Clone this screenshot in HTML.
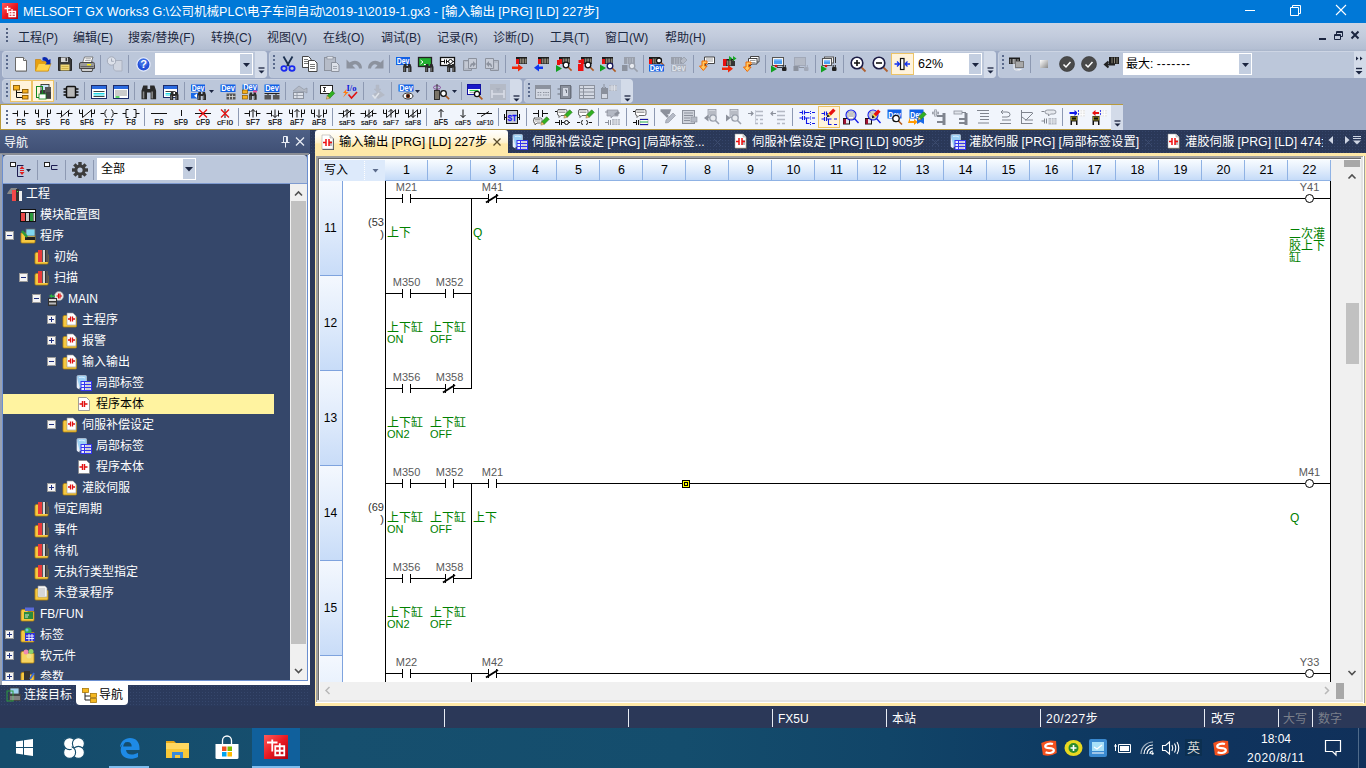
<!DOCTYPE html>
<html lang="zh-CN"><head><meta charset="utf-8"><title>MELSOFT GX Works3</title><style>
html,body{margin:0;padding:0;background:#2b3858;}
body{width:1366px;height:768px;overflow:hidden;position:relative;font-family:"Liberation Sans","Noto Sans CJK SC",sans-serif;font-size:12px;color:#1e2a44;}
div{position:absolute;box-sizing:border-box;}
svg{position:absolute;overflow:visible;}
.t{white-space:nowrap;line-height:16px;height:16px;}
.w{color:#fff;}
.menu{font-size:12px;color:#1b2740;}
.dev{font-size:11px;color:#5a5a5a;line-height:12px;height:12px;text-align:center;width:43px;}
.cm{font-size:12px;color:#008000;line-height:11px;height:11px;font-family:"Liberation Sans","Noto Sans CJK SC",sans-serif;}
.cn{font-size:12.5px;color:#000;line-height:20px;height:20px;text-align:center;width:43px;}
.tree{color:#fff;font-size:12px;}
.tab{color:#fff;font-size:12px;}
.sb{color:#fff;font-size:12px;}
.tbg{background:#bcc7da;border-radius:4px;border-top:1px solid #cdd5e4;border-left:1px solid #c8d1e1;}
.sep{width:1px;background:#8d99b2;}
</style></head><body>
<div style="left:0px;top:0px;width:1366px;height:23px;background:#0078d7;"></div>
<svg style="left:2px;top:3px" width="16" height="16" viewBox="0 0 16 16"><defs><linearGradient id="gi" x1="0" y1="0" x2="1" y2="1"><stop offset="0" stop-color="#ff5a5a"/><stop offset="0.5" stop-color="#e81a22"/><stop offset="1" stop-color="#b00010"/></linearGradient></defs><rect width="16" height="16" fill="url(#gi)"/><path d="M2.5 5.5h6M5.5 3v7M7 8.5h6.5v5H7zM10 6v8M7 11h6.5" stroke="#fff" stroke-width="1.3" fill="none"/></svg>
<div class="t w" style="left:23px;top:4px;font-size:12.5px;">MELSOFT GX Works3 G:\公司机械PLC\电子车间自动\2019-1\2019-1.gx3 - [输入输出 [PRG] [LD] 227步]</div>
<svg style="left:1240px;top:0" width="126" height="23"><path d="M5 10.5h10" stroke="#fff" stroke-width="1"/><path d="M50.5 7.5h8v8h-8zM52.5 7.5v-2h8v8h-2" stroke="#fff" fill="none" stroke-width="1"/><path d="M96 5l10 10M106 5l-10 10" stroke="#fff" stroke-width="1.1"/></svg>
<div style="left:0px;top:23px;width:1366px;height:28px;background:linear-gradient(#ccd4e3,#c3ccdd 45%,#b4bfd3 92%,#a9b5cb);"></div>
<div style="left:6px;top:28px;width:2px;height:2px;background:#52607f;"></div>
<div style="left:6px;top:32px;width:2px;height:2px;background:#52607f;"></div>
<div style="left:6px;top:36px;width:2px;height:2px;background:#52607f;"></div>
<div style="left:6px;top:40px;width:2px;height:2px;background:#52607f;"></div>
<div class="t menu" style="left:18px;top:30px;">工程(P)</div>
<div class="t menu" style="left:73px;top:30px;">编辑(E)</div>
<div class="t menu" style="left:128px;top:30px;">搜索/替换(F)</div>
<div class="t menu" style="left:211px;top:30px;">转换(C)</div>
<div class="t menu" style="left:267px;top:30px;">视图(V)</div>
<div class="t menu" style="left:323px;top:30px;">在线(O)</div>
<div class="t menu" style="left:381px;top:30px;">调试(B)</div>
<div class="t menu" style="left:437px;top:30px;">记录(R)</div>
<div class="t menu" style="left:493px;top:30px;">诊断(D)</div>
<div class="t menu" style="left:550px;top:30px;">工具(T)</div>
<div class="t menu" style="left:605px;top:30px;">窗口(W)</div>
<div class="t menu" style="left:665px;top:30px;">帮助(H)</div>
<svg style="left:1316px;top:28px" width="48" height="16"><path d="M3 11h7" stroke="#1b2540" stroke-width="2"/><path d="M18.5 6.5h6v5h-6zM18.5 7.5h6M20.5 6v-2.500h6v5h-2M20.500 4.500h6" stroke="#1b2540" fill="none" stroke-width="1"/><path d="M35.500 3.500l7 7M42.500 3.500l-7 7" stroke="#1b2540" stroke-width="2"/></svg>
<div style="left:0px;top:51px;width:1366px;height:79px;background:#9ca9c4;"></div>
<div class="tbg" style="left:2px;top:51px;width:265px;height:27px;"></div>
<div class="tbg" style="left:269px;top:51px;width:727px;height:27px;"></div>
<div class="tbg" style="left:998px;top:51px;width:368px;height:27px;border-radius:4px 0 0 4px;"></div>
<div class="tbg" style="left:2px;top:79px;width:520px;height:24px;"></div>
<div class="tbg" style="left:524px;top:79px;width:108px;height:24px;"></div>
<div style="left:255px;top:51px;width:12px;height:27px;background:#d3dbe9;border-radius:0 4px 4px 0;"></div>
<div style="left:984px;top:51px;width:12px;height:27px;background:#d3dbe9;border-radius:0 4px 4px 0;"></div>
<div style="left:510px;top:79px;width:12px;height:24px;background:#d3dbe9;border-radius:0 4px 4px 0;"></div>
<div style="left:621px;top:79px;width:12px;height:24px;background:#d3dbe9;border-radius:0 4px 4px 0;"></div>
<div style="left:0px;top:104px;width:1123px;height:26px;background:#f1f5fc;border:1px solid #b89a3c;border-width:1px 0 1px 1px;"></div>
<div style="left:1111px;top:105px;width:12px;height:25px;background:#d3dbe9;"></div>
<div style="left:6px;top:55px;width:2px;height:2px;background:#5a6a8c;"></div>
<div style="left:6px;top:59px;width:2px;height:2px;background:#5a6a8c;"></div>
<div style="left:6px;top:63px;width:2px;height:2px;background:#5a6a8c;"></div>
<div style="left:6px;top:67px;width:2px;height:2px;background:#5a6a8c;"></div>
<svg style="left:13px;top:56px" width="16" height="16" viewBox="0 0 16 16"><path d="M3 2h8l3 3v10.500h-11z" fill="#777"/><path d="M2.500 1.500h8l3 3v10.500h-11z" fill="#fff" stroke="#6a6a6a"/><path d="M10.500 1.500v3h3" fill="#e8e8e8" stroke="#6a6a6a"/></svg>
<svg style="left:35px;top:56px" width="16" height="16" viewBox="0 0 16 16"><path d="M0.500 3.500h5l1.500 2h6.500v9.500h-13z" fill="#e8a010" stroke="#c07800" stroke-width="0.600"/><path d="M0.500 15l3-7.500h12.500l-3 7.500z" fill="#ffd24a" stroke="#d89a10" stroke-width="0.700"/><path d="M7.500 1.500q4.500-1.500 6 2.500l2-1v5.500h-5.500l1.800-1.600q-1-2.800-4.300-2.400z" fill="#0828b0"/></svg>
<svg style="left:57px;top:56px" width="16" height="16" viewBox="0 0 16 16"><path d="M1.500 1.500h11l2 2v11h-13z" fill="#3a3a3a" stroke="#111" stroke-width="0.800"/><rect x="4" y="1.500" width="7" height="4.500" fill="#d8d8d8"/><rect x="8.500" y="2" width="1.600" height="3.200" fill="#3a3a3a"/><rect x="3.500" y="8.500" width="9" height="6" fill="#f0d878"/><path d="M4.500 10.500h7M4.500 12.500h7" stroke="#c8a840" stroke-width="0.800"/></svg>
<svg style="left:79px;top:56px" width="16" height="16" viewBox="0 0 16 16"><path d="M3.500 7l2-6h8.500l-2 6z" fill="#fff" stroke="#666" stroke-width="0.800"/><path d="M6.500 2.800h5.500M6 4.600h5.500" stroke="#888" stroke-width="0.800"/><path d="M0.500 8q0-1.500 1.500-1.500h12q1.500 0 1.500 1.500v4.500h-15z" fill="#9a9a9a" stroke="#3c3c3c" stroke-width="0.900"/><path d="M2 12.500h12l-1 3h-10z" fill="#d0d0d0" stroke="#3c3c3c" stroke-width="0.900"/><path d="M1.500 10.500h13" stroke="#555" stroke-width="0.800"/><rect x="8" y="8" width="4" height="1.400" fill="#f8f000"/><path d="M13 5.500l2.500 1.500v2" stroke="#777" fill="none" stroke-width="0.800"/></svg>
<svg style="left:107px;top:56px" width="16" height="16" viewBox="0 0 16 16"><path d="M6.500 4.500h8.500v10.500h-6.500l-2-2z" fill="#d0d5e0" stroke="#aab1c0"/><circle cx="4.500" cy="5" r="4.200" fill="#dde1ea" stroke="#a4abba"/><path d="M4.500 2.500v2.800h2.300" stroke="#a4abba" fill="none"/></svg>
<svg style="left:136px;top:56px" width="16" height="16" viewBox="0 0 16 16"><circle cx="7.500" cy="8.500" r="6.600" fill="#2450d8" stroke="#e8eefc" stroke-width="1.200"/><circle cx="7.500" cy="6.500" r="4.500" fill="#5a8af0" opacity="0.450"/><text x="7.500" y="12.300" font-family="Liberation Sans,sans-serif" font-weight="bold" font-size="11" text-anchor="middle" fill="#fff">?</text></svg>
<div class="sep" style="left:100px;top:55px;width:1px;height:18px;"></div>
<div class="sep" style="left:128px;top:55px;width:1px;height:18px;"></div>
<div style="left:155px;top:53px;width:98px;height:22px;background:#fff;"></div>
<div style="left:240px;top:54px;width:12px;height:20px;background:#c3cee0;"></div>
<svg style="left:243px;top:63px" width="7" height="4"><path d="M0 0h7l-3.500 4z" fill="#1b2540"/></svg>
<svg style="left:258px;top:67px" width="8" height="8"><path d="M0.500 1h6" stroke="#1b2540" stroke-width="1.300"/><path d="M0.500 3.500h6l-3 3z" fill="#1b2540"/></svg>
<div style="left:273px;top:55px;width:2px;height:2px;background:#5a6a8c;"></div>
<div style="left:273px;top:59px;width:2px;height:2px;background:#5a6a8c;"></div>
<div style="left:273px;top:63px;width:2px;height:2px;background:#5a6a8c;"></div>
<div style="left:273px;top:67px;width:2px;height:2px;background:#5a6a8c;"></div>
<svg style="left:280px;top:56px" width="16" height="16" viewBox="0 0 16 16"><path d="M3.500 0.500l5.500 9.500M12.500 0.500l-5.500 9.500" stroke="#1c3050" stroke-width="1.800"/><ellipse cx="4" cy="12.500" rx="2.600" ry="2.300" fill="none" stroke="#1828f0" stroke-width="1.800"/><ellipse cx="12" cy="12.500" rx="2.600" ry="2.300" fill="none" stroke="#1828f0" stroke-width="1.800"/></svg>
<svg style="left:302px;top:56px" width="16" height="16" viewBox="0 0 16 16"><path d="M0.500 0.500h6l2.500 2.500v8.500h-8.500z" fill="#fff" stroke="#333" stroke-width="0.900"/><path d="M2 3.500h4M2 5.500h5M2 7.500h5" stroke="#555" stroke-width="0.800"/><path d="M6.500 4.500h6l2.500 2.500v8.500h-8.500z" fill="#fff" stroke="#333" stroke-width="0.900"/><path d="M8 8.500h5M8 10.500h5M8 12.500h5" stroke="#555" stroke-width="0.800"/></svg>
<svg style="left:324px;top:56px" width="16" height="16" viewBox="0 0 16 16"><rect x="0.500" y="1.500" width="11" height="13" fill="#b6bcc8" stroke="#8c929e"/><rect x="3" y="0.500" width="6" height="2.500" fill="#e0e4ec" stroke="#8c929e" stroke-width="0.700"/><path d="M7.500 6.500h5l2.500 2.500v6.500h-7.500z" fill="#dde1e9" stroke="#8c929e"/><path d="M9 10.500h4M9 12.500h4" stroke="#8c929e" stroke-width="0.700"/></svg>
<svg style="left:346px;top:56px" width="16" height="16" viewBox="0 0 16 16"><path d="M0.500 3.500v9h9l-3-3q2.500-2 4.500-0.500t2 3.500h3q0-5-4-7t-8.500 1z" fill="#8c929e"/></svg>
<svg style="left:368px;top:56px" width="16" height="16" viewBox="0 0 16 16"><g transform="translate(16,0) scale(-1,1)"><path d="M0.500 3.500v9h9l-3-3q2.500-2 4.500-0.500t2 3.500h3q0-5-4-7t-8.500 1z" fill="#8c929e"/></g></svg>
<svg style="left:396px;top:56px" width="16" height="16" viewBox="0 0 16 16"><rect x="0" y="1" width="14" height="8" fill="#1060e6"/><text x="7.0" y="8.2" font-family="Liberation Sans,sans-serif" font-weight="bold" font-size="8.5" text-anchor="middle" fill="#fff" textLength="12.5" lengthAdjust="spacingAndGlyphs">Dev</text><g transform="translate(7,8) scale(1)"><path d="M1 0h2.500v2h1.500v-2h2.500l1 3v5h-3.200v-4h-2.100v4h-3.200v-5z" fill="#2a2a2a"/><path d="M1.200 3.500v4M6.200 3.500v4" stroke="#8a8a8a" stroke-width="0.900"/></g></svg>
<svg style="left:418px;top:56px" width="16" height="16" viewBox="0 0 16 16"><rect x="0.500" y="1.500" width="13" height="9" fill="#22b030" stroke="#222" stroke-width="1.300"/><path d="M2.500 4l2.500 2-2.500 2M6 8.500h3" stroke="#fff" fill="none" stroke-width="1"/><g transform="translate(7,8) scale(1)"><path d="M1 0h2.500v2h1.500v-2h2.500l1 3v5h-3.200v-4h-2.100v4h-3.200v-5z" fill="#2a2a2a"/><path d="M1.200 3.500v4M6.200 3.500v4" stroke="#8a8a8a" stroke-width="0.900"/></g></svg>
<svg style="left:440px;top:56px" width="16" height="16" viewBox="0 0 16 16"><rect x="0.500" y="1.500" width="14" height="8" fill="#fff" stroke="#111" stroke-width="1.300"/><path d="M1 5.500h3M4.500 3.500v4M6.500 3.500v4M6.500 5.500h2M13 5.500h1.500" stroke="#111" stroke-width="1"/><circle cx="10.500" cy="5.500" r="2" fill="none" stroke="#111"/><g transform="translate(7,8) scale(1)"><path d="M1 0h2.500v2h1.500v-2h2.500l1 3v5h-3.200v-4h-2.100v4h-3.200v-5z" fill="#2a2a2a"/><path d="M1.200 3.500v4M6.200 3.500v4" stroke="#8a8a8a" stroke-width="0.900"/></g></svg>
<svg style="left:462px;top:56px" width="16" height="16" viewBox="0 0 16 16"><path d="M1.500 4.500h8v10h-8z" fill="#b4bac6" stroke="#8c929e"/><path d="M6.500 2.500h8v10h-8z" fill="#c6cbd6" stroke="#8c929e"/><path d="M8 11q0-4 3-4v-2l3 3-3 3v-2q-1.500 0-2 2z" fill="#8c929e"/><path d="M3 7h3M3 9h3M3 11h3" stroke="#dde1e9" stroke-width="0.800"/></svg>
<svg style="left:484px;top:56px" width="16" height="16" viewBox="0 0 16 16"><path d="M6.500 4.500h8v10h-8z" fill="#b4bac6" stroke="#8c929e"/><path d="M1.500 2.500h8v10h-8z" fill="#c6cbd6" stroke="#8c929e"/><path d="M8 11q0-4-3-4v-2l-3 3 3 3v-2q1.500 0 2 2z" fill="#8c929e"/><path d="M10.500 8h3M10.500 10h3M10.500 12h3" stroke="#dde1e9" stroke-width="0.800"/></svg>
<svg style="left:512px;top:56px" width="16" height="16" viewBox="0 0 16 16"><rect x="4" y="1" width="11" height="7" fill="#1c1c1c"/><rect x="4" y="3" width="3" height="5" fill="#e81010"/><rect x="7.7" y="2.5" width="1.800" height="5" fill="#8a8474"/><rect x="10.2" y="2.5" width="1.800" height="5" fill="#8a8474"/><rect x="12.7" y="2.5" width="1.800" height="5" fill="#8a8474"/><path d="M0 10.5h6v-2.500l5 3.800-5 3.800v-2.500h-6z" fill="#f02808"/></svg>
<svg style="left:534px;top:56px" width="16" height="16" viewBox="0 0 16 16"><rect x="4" y="1" width="11" height="7" fill="#1c1c1c"/><rect x="4" y="3" width="3" height="5" fill="#e81010"/><rect x="7.7" y="2.5" width="1.800" height="5" fill="#8a8474"/><rect x="10.2" y="2.5" width="1.800" height="5" fill="#8a8474"/><rect x="12.7" y="2.5" width="1.800" height="5" fill="#8a8474"/><path d="M9 10.5h-4v-2.500l-5 3.800 5 3.800v-2.500h4z" fill="#1038f0"/></svg>
<svg style="left:556px;top:56px" width="16" height="16" viewBox="0 0 16 16"><rect x="3" y="1" width="11" height="7" fill="#1c1c1c"/><rect x="3" y="3" width="3" height="5" fill="#e81010"/><rect x="6.7" y="2.5" width="1.800" height="5" fill="#8a8474"/><rect x="9.2" y="2.5" width="1.800" height="5" fill="#8a8474"/><rect x="11.7" y="2.5" width="1.800" height="5" fill="#8a8474"/><rect x="1" y="4" width="3" height="5" fill="#e81010"/><path d="M0 9l6 3.500-6 3.500z" fill="#10a020"/><path d="M11.959999999999999 10.959999999999999L15.600000000000001 14.600000000000001" stroke="#b05a20" stroke-width="1.600"/><circle cx="10" cy="9" r="2.8" fill="#fff" stroke="#111" stroke-width="1.300"/></svg>
<svg style="left:578px;top:56px" width="16" height="16" viewBox="0 0 16 16"><rect x="3" y="1" width="11" height="7" fill="#1c1c1c"/><rect x="3" y="3" width="3" height="5" fill="#e81010"/><rect x="6.7" y="2.5" width="1.800" height="5" fill="#8a8474"/><rect x="9.2" y="2.5" width="1.800" height="5" fill="#8a8474"/><rect x="11.7" y="2.5" width="1.800" height="5" fill="#8a8474"/><rect x="0.500" y="4" width="4" height="3" fill="#e81010"/><rect x="0" y="8" width="5.500" height="7" fill="#f01010"/><path d="M11.959999999999999 10.959999999999999L15.600000000000001 14.600000000000001" stroke="#b05a20" stroke-width="1.600"/><circle cx="10" cy="9" r="2.8" fill="#fff" stroke="#111" stroke-width="1.300"/></svg>
<svg style="left:600px;top:56px" width="16" height="16" viewBox="0 0 16 16"><rect x="2" y="1" width="11" height="7" fill="#1c1c1c"/><rect x="2" y="3" width="3" height="5" fill="#e81010"/><rect x="5.7" y="2.5" width="1.800" height="5" fill="#8a8474"/><rect x="8.2" y="2.5" width="1.800" height="5" fill="#8a8474"/><rect x="10.7" y="2.5" width="1.800" height="5" fill="#8a8474"/><path d="M0 8.5l6 3.500-6 3.500z" fill="#10a020"/><path d="M11.959999999999999 11.959999999999999L15.600000000000001 15.600000000000001" stroke="#b05a20" stroke-width="1.600"/><circle cx="10" cy="10" r="2.8" fill="#fff" stroke="#18185a" stroke-width="1.300"/></svg>
<svg style="left:622px;top:56px" width="16" height="16" viewBox="0 0 16 16"><rect x="2" y="1" width="11" height="7" fill="#9aa0ac"/><path d="M5.5 2v6M8 2v6M10.5 2v6" stroke="#b8bec9" stroke-width="0.800"/><rect x="0" y="9" width="5.500" height="6" fill="#8c929e"/><path d="M11.959999999999999 11.959999999999999L15.600000000000001 15.600000000000001" stroke="#9aa0ac" stroke-width="1.600"/><circle cx="10" cy="10" r="2.8" fill="#e8ebf0" stroke="#9aa0ac" stroke-width="1.300"/></svg>
<svg style="left:649px;top:56px" width="16" height="16" viewBox="0 0 16 16"><rect x="0" y="1" width="11" height="7" fill="#1c1c1c"/><rect x="0" y="3" width="3" height="5" fill="#e81010"/><rect x="3.7" y="2.5" width="1.800" height="5" fill="#8a8474"/><rect x="6.2" y="2.5" width="1.800" height="5" fill="#8a8474"/><rect x="8.7" y="2.5" width="1.800" height="5" fill="#8a8474"/><path d="M11.75 6.25L15.3 9.8" stroke="#b05a20" stroke-width="1.600"/><circle cx="10" cy="4.5" r="2.5" fill="#fff" stroke="#111" stroke-width="1.300"/><rect x="0" y="8.5" width="15" height="7" fill="#1060e6"/><text x="7.5" y="14.7" font-family="Liberation Sans,sans-serif" font-weight="bold" font-size="8.5" text-anchor="middle" fill="#fff" textLength="13.5" lengthAdjust="spacingAndGlyphs">Dev</text></svg>
<svg style="left:671px;top:56px" width="16" height="16" viewBox="0 0 16 16"><rect x="0" y="1" width="11" height="7" fill="#9aa0ac"/><path d="M3.5 2v6M6 2v6M8.5 2v6" stroke="#b8bec9" stroke-width="0.800"/><path d="M9 5l4-4 3 3-4 4z" fill="#b4bac6" stroke="#8c929e" stroke-width="0.600"/><rect x="0" y="8.5" width="15" height="7" fill="#a8aeba"/><text x="7.5" y="14.7" font-family="Liberation Sans,sans-serif" font-weight="bold" font-size="8.5" text-anchor="middle" fill="#dfe3ea" textLength="13.5" lengthAdjust="spacingAndGlyphs">Dev</text></svg>
<svg style="left:700px;top:56px" width="16" height="16" viewBox="0 0 16 16"><path d="M4.5 1h10v6.5h-6.5l-2.500 2.500v-2.500h-1z" fill="#fff" stroke="#333" stroke-width="0.900"/><path d="M6.0 3h7M6.0 5h7" stroke="#777" stroke-width="0.700"/><path d="M7 5h-5v5h-2.500l3.800 4.500 3.800-4.500h-2.500v-2.500h2.400z" fill="#ffc860" stroke="#f06800" stroke-width="1"/></svg>
<svg style="left:722px;top:56px" width="16" height="16" viewBox="0 0 16 16"><rect x="1" y="3" width="11" height="7" fill="#1c1c1c"/><rect x="1" y="5" width="3" height="5" fill="#e81010"/><rect x="4.7" y="4.5" width="1.800" height="5" fill="#8a8474"/><rect x="7.2" y="4.5" width="1.800" height="5" fill="#8a8474"/><rect x="9.7" y="4.5" width="1.800" height="5" fill="#8a8474"/><rect x="1" y="3" width="3.500" height="3.500" fill="#e81010"/><path d="M7 0l3.500 2.500-3.500 2.500zM11 0l3.500 2.500-3.500 2.500z" fill="#18a828"/><rect x="9" y="5" width="4" height="5" fill="#333"/><path d="M0 11.5h6v-2.500l5 3.800-5 3.800v-2.500h-6z" fill="#f02808"/></svg>
<svg style="left:744px;top:56px" width="16" height="16" viewBox="0 0 16 16"><path d="M6.5 0.5h8.5v5.5h-5.0l-2.500 2.500v-2.500h-1z" fill="#fff" stroke="#333" stroke-width="0.900"/><path d="M8.0 2.5h5.5M8.0 4.5h5.5" stroke="#777" stroke-width="0.700"/><path d="M4.5 2.5h8.5v5.5h-5.0l-2.500 2.500v-2.500h-1z" fill="#fff" stroke="#333" stroke-width="0.900"/><path d="M6.0 4.5h5.5M6.0 6.5h5.5" stroke="#777" stroke-width="0.700"/><path d="M7 6h-5v5h-2.500l3.800 4.500 3.800-4.500h-2.500v-2.500h2.400z" fill="#ffc860" stroke="#f06800" stroke-width="1"/></svg>
<svg style="left:771px;top:56px" width="16" height="16" viewBox="0 0 16 16"><rect x="1.5" y="1.5" width="11" height="8" fill="#f4f4f4" stroke="#555"/><rect x="3" y="3" width="8" height="5" fill="#4a9ef0"/><rect x="3" y="3" width="8" height="1.500" fill="#8cc4ff"/><path d="M6 9.500v2h5" stroke="#333" fill="none"/><path d="M0 9.5l6 3.500-6 3.500z" fill="#10a020"/><circle cx="5" cy="10" r="1.300" fill="#e01010"/><rect x="11" y="11" width="4.500" height="4" rx="1" fill="#222"/><path d="M12.2 9v2M14.3 9v2" stroke="#222" stroke-width="1"/></svg>
<svg style="left:793px;top:56px" width="16" height="16" viewBox="0 0 16 16"><rect x="1.5" y="1.5" width="11" height="8" fill="#b4bac6" stroke="#a2a9b8"/><path d="M6 9.500v2h5" stroke="#8c929e" fill="none"/><rect x="0.500" y="10" width="5" height="5" fill="#8c929e"/><rect x="11" y="11" width="4.500" height="4" rx="1" fill="#a2a9b8"/><path d="M12.2 9v2M14.3 9v2" stroke="#a2a9b8" stroke-width="1"/></svg>
<svg style="left:821px;top:56px" width="16" height="16" viewBox="0 0 16 16"><rect x="3.5" y="1.0" width="9" height="6" fill="#f4f4f4" stroke="#555"/><rect x="5" y="2.5" width="6" height="3" fill="#4a9ef0"/><rect x="5" y="2.5" width="6" height="1.500" fill="#8cc4ff"/><rect x="1.5" y="2.5" width="9" height="7" fill="#f4f4f4" stroke="#555"/><rect x="3" y="4" width="6" height="4" fill="#4a9ef0"/><rect x="3" y="4" width="6" height="1.500" fill="#8cc4ff"/><path d="M14.500 1v6" stroke="#333"/><path d="M0 9.5l6 3.500-6 3.500z" fill="#10a020"/><circle cx="5" cy="10" r="1.300" fill="#e01010"/><rect x="11" y="11" width="4.500" height="4" rx="1" fill="#222"/><path d="M12.2 9v2M14.3 9v2" stroke="#222" stroke-width="1"/></svg>
<svg style="left:850px;top:56px" width="16" height="16" viewBox="0 0 16 16"><path d="M11.500 11.500l4 4" stroke="#b06030" stroke-width="1.800"/><circle cx="7" cy="7" r="5.800" fill="#fff" stroke="#1c1c44" stroke-width="1.600"/><path d="M4 7h6M7 4v6" stroke="#111" stroke-width="1.600"/></svg>
<svg style="left:872px;top:56px" width="16" height="16" viewBox="0 0 16 16"><path d="M11.500 11.500l4 4" stroke="#b06030" stroke-width="1.800"/><circle cx="7" cy="7" r="5.800" fill="#fff" stroke="#1c1c44" stroke-width="1.600"/><path d="M4 7h6" stroke="#111" stroke-width="1.600"/></svg>
<div class="sep" style="left:389px;top:55px;width:1px;height:18px;"></div>
<div class="sep" style="left:505px;top:55px;width:1px;height:18px;"></div>
<div class="sep" style="left:643px;top:55px;width:1px;height:18px;"></div>
<div class="sep" style="left:693px;top:55px;width:1px;height:18px;"></div>
<div class="sep" style="left:765px;top:55px;width:1px;height:18px;"></div>
<div class="sep" style="left:815px;top:55px;width:1px;height:18px;"></div>
<div class="sep" style="left:843px;top:55px;width:1px;height:18px;"></div>
<div style="left:891px;top:53px;width:23px;height:22px;background:#fff3dc;border:1px solid #ecc468;"></div>
<svg style="left:894px;top:56px" width="16" height="16" viewBox="0 0 16 16"><rect x="6.500" y="2.500" width="3.500" height="11" fill="#fff" stroke="#111" stroke-width="1.200"/><path d="M0.500 8h5M3 5.500l2.500 2.500-2.500 2.500M16 8h-5M13.500 5.500l-2.500 2.500 2.500 2.500" stroke="#1030f0" stroke-width="1.300" fill="none"/></svg>
<div style="left:914px;top:53px;width:68px;height:22px;background:#fff;"></div>
<div style="left:969px;top:54px;width:12px;height:20px;background:#c3cee0;"></div>
<svg style="left:972px;top:63px" width="7" height="4"><path d="M0 0h7l-3.500 4z" fill="#1b2540"/></svg>
<div class="t" style="left:918px;top:56px;color:#000;font-size:12.5px;">62%</div>
<svg style="left:987px;top:67px" width="8" height="8"><path d="M0.500 1h6" stroke="#1b2540" stroke-width="1.300"/><path d="M0.500 3.500h6l-3 3z" fill="#1b2540"/></svg>
<div style="left:1002px;top:55px;width:2px;height:2px;background:#5a6a8c;"></div>
<div style="left:1002px;top:59px;width:2px;height:2px;background:#5a6a8c;"></div>
<div style="left:1002px;top:63px;width:2px;height:2px;background:#5a6a8c;"></div>
<div style="left:1002px;top:67px;width:2px;height:2px;background:#5a6a8c;"></div>
<svg style="left:1009px;top:56px" width="16" height="16" viewBox="0 0 16 16"><rect x="0" y="1.500" width="11" height="6.500" fill="#1c1c1c"/><path d="M1.500 3v4.500M4 3v4.500M6.500 3v4.500M9 3v4.500" stroke="#777" stroke-width="1.500"/><rect x="6.500" y="5.500" width="8" height="6" fill="#a8a8a8" stroke="#777"/><path d="M5 3v9q0 2 2 2h4M8.500 13.500h4" stroke="#eee" fill="none"/></svg>
<svg style="left:1036px;top:56px" width="16" height="16" viewBox="0 0 16 16"><defs><linearGradient id="gsq" x1="0" y1="0" x2="1" y2="1"><stop offset="0" stop-color="#fff"/><stop offset="1" stop-color="#888"/></linearGradient></defs><rect x="4" y="4" width="8" height="8" fill="url(#gsq)"/></svg>
<svg style="left:1059px;top:56px" width="16" height="16" viewBox="0 0 16 16"><circle cx="8" cy="8" r="7.500" fill="#4a4a4a" stroke="#333" stroke-width="0.600"/><path d="M4.500 8.500l2.500 2.500 4.500-5" stroke="#fff" stroke-width="1.500" fill="none"/></svg>
<svg style="left:1081px;top:56px" width="16" height="16" viewBox="0 0 16 16"><circle cx="8" cy="8" r="7.500" fill="#4a4a4a" stroke="#333" stroke-width="0.600"/><path d="M4.500 8.500l2.500 2.500 4.500-5" stroke="#fff" stroke-width="1.500" fill="none"/></svg>
<svg style="left:1103px;top:56px" width="16" height="16" viewBox="0 0 16 16"><rect x="6" y="1" width="10" height="7" fill="#1c1c1c"/><path d="M9 1.500v6M11.500 1.500v6M14 1.500v6" stroke="#8a8474"/><path d="M12 8.500h-9M5.500 5.500l-3.500 3 3.500 3" stroke="#222" stroke-width="2" fill="none"/></svg>
<div class="sep" style="left:1030px;top:55px;width:1px;height:18px;"></div>
<div style="left:1123px;top:53px;width:129px;height:22px;background:#fff;"></div>
<div style="left:1239px;top:54px;width:12px;height:20px;background:#c3cee0;"></div>
<svg style="left:1242px;top:63px" width="7" height="4"><path d="M0 0h7l-3.500 4z" fill="#1b2540"/></svg>
<div class="t" style="left:1126px;top:56px;color:#000;font-size:12px;">最大: <span style="letter-spacing:0.9px">-------</span></div>
<div style="left:1354px;top:51px;width:12px;height:27px;background:#d3dbe9;"></div>
<svg style="left:1355px;top:54px" width="9" height="22"><path d="M1 2.500l2.500 2-2.500 2zM5 2.500l2.500 2-2.500 2z" fill="#1b2540"/><path d="M1 14.500h6" stroke="#1b2540" stroke-width="1.400"/><path d="M0.500 17h7l-3.500 3.500z" fill="#1b2540"/></svg>
<div style="left:6px;top:83px;width:2px;height:2px;background:#5a6a8c;"></div>
<div style="left:6px;top:87px;width:2px;height:2px;background:#5a6a8c;"></div>
<div style="left:6px;top:91px;width:2px;height:2px;background:#5a6a8c;"></div>
<div style="left:6px;top:95px;width:2px;height:2px;background:#5a6a8c;"></div>
<div style="left:10px;top:80px;width:22px;height:22px;background:#fff3dc;border:1px solid #ecc468;"></div>
<div style="left:32px;top:80px;width:22px;height:22px;background:#fff3dc;border:1px solid #ecc468;"></div>
<svg style="left:13px;top:84px" width="16" height="16" viewBox="0 0 16 16"><path d="M3.500 6v7.500h6M3.500 8.500h6" stroke="#111" fill="none"/><rect x="0.500" y="1.500" width="6" height="4.500" fill="#f5b020" stroke="#8a5a00" stroke-width="0.900"/><rect x="9.500" y="5.500" width="5.500" height="3.500" fill="#f5b020" stroke="#8a5a00" stroke-width="0.900"/><rect x="9.500" y="11.500" width="5.500" height="3.500" fill="#f5b020" stroke="#8a5a00" stroke-width="0.900"/></svg>
<svg style="left:36px;top:84px" width="16" height="16" viewBox="0 0 16 16"><rect x="5" y="0.500" width="8" height="6" fill="#c8e4f8" stroke="#333" stroke-width="0.900"/><rect x="4" y="6.500" width="11" height="8" fill="#3a3a3a"/><rect x="9" y="3" width="6" height="12" fill="#555"/><rect x="0.500" y="2.500" width="6" height="11" fill="none" stroke="#108a20"/><rect x="3" y="10" width="7" height="5" fill="#fff" stroke="#108a20" stroke-width="0.800"/><path d="M10 9h5M10 11h5M10 13h5" stroke="#222" stroke-width="0.800"/></svg>
<svg style="left:63px;top:84px" width="16" height="16" viewBox="0 0 16 16"><rect x="3.500" y="2.500" width="9" height="11" rx="1" fill="#b8b8b8" stroke="#111" stroke-width="1.500"/><path d="M0.500 5h3M0.500 8h3M0.500 11h3M12.500 5h3M12.500 8h3M12.500 11h3" stroke="#111" stroke-width="1.600"/></svg>
<svg style="left:91px;top:84px" width="16" height="16" viewBox="0 0 16 16"><rect x="0.500" y="1.500" width="15" height="13" fill="#fff" stroke="#1c2c6a"/><rect x="1" y="2" width="14" height="3" fill="#2a6ae0"/><path d="M2.500 7.500h11M2.500 12.500h11" stroke="#444"/><path d="M2.500 9.500h11M2.500 11h11" stroke="#20d8e8" stroke-width="1.200"/></svg>
<svg style="left:113px;top:84px" width="16" height="16" viewBox="0 0 16 16"><rect x="0.500" y="1.500" width="15" height="13" fill="#fff" stroke="#1c2c6a"/><rect x="1" y="2" width="14" height="3" fill="#2a6ae0"/><path d="M2.500 7h11M2.500 9h11M2.500 11h11" stroke="#333" stroke-dasharray="1 1"/><path d="M2.500 13h4" stroke="#18c028" stroke-width="1.400"/></svg>
<svg style="left:141px;top:84px" width="16" height="16" viewBox="0 0 16 16"><g transform="translate(0.5,1.5) scale(1.72)"><path d="M1 0h2.500v2h1.500v-2h2.500l1 3v5h-3.200v-4h-2.100v4h-3.200v-5z" fill="#2a2a2a"/><path d="M1.200 3.500v4M6.200 3.500v4" stroke="#8a8a8a" stroke-width="0.900"/></g></svg>
<svg style="left:163px;top:84px" width="16" height="16" viewBox="0 0 16 16"><rect x="0.500" y="1.500" width="14" height="12" fill="#fff" stroke="#1c2c6a"/><rect x="1" y="2" width="13" height="3" fill="#2a6ae0"/><path d="M2.500 7.500h10" stroke="#444"/><path d="M2.500 9.500h6M2.500 11h6" stroke="#20d8e8" stroke-width="1.200"/><g transform="translate(7,8) scale(1)"><path d="M1 0h2.500v2h1.500v-2h2.500l1 3v5h-3.200v-4h-2.100v4h-3.200v-5z" fill="#2a2a2a"/><path d="M1.200 3.500v4M6.200 3.500v4" stroke="#8a8a8a" stroke-width="0.900"/></g></svg>
<svg style="left:191px;top:84px" width="16" height="16" viewBox="0 0 16 16"><rect x="0" y="0.5" width="14" height="7" fill="#1060e6"/><text x="7.0" y="6.7" font-family="Liberation Sans,sans-serif" font-weight="bold" font-size="8.5" text-anchor="middle" fill="#fff" textLength="12.5" lengthAdjust="spacingAndGlyphs">Dev</text><rect x="0" y="9" width="7" height="5.500" fill="#1a6ae8"/><path d="M6 9.500l-3 2.300 3 2.300z" fill="#fff"/><g transform="translate(6.5,8) scale(1)"><path d="M1 0h2.500v2h1.500v-2h2.500l1 3v5h-3.200v-4h-2.100v4h-3.200v-5z" fill="#2a2a2a"/><path d="M1.200 3.500v4M6.200 3.500v4" stroke="#8a8a8a" stroke-width="0.900"/></g></svg>
<svg style="left:220px;top:84px" width="16" height="16" viewBox="0 0 16 16"><rect x="0.5" y="0.5" width="15" height="7.5" fill="#1060e6"/><text x="8.0" y="7.2" font-family="Liberation Sans,sans-serif" font-weight="bold" font-size="8.5" text-anchor="middle" fill="#fff" textLength="13.5" lengthAdjust="spacingAndGlyphs">Dev</text><rect x="6.500" y="9.500" width="9" height="6" fill="#555"/><path d="M6.500 12.500h9M9.500 10.500v5M12.500 10.500v5" stroke="#ddd" stroke-width="0.800"/></svg>
<svg style="left:242px;top:84px" width="16" height="16" viewBox="0 0 16 16"><rect x="0.5" y="0.5" width="15" height="6.5" fill="#1060e6"/><text x="8.0" y="6.2" font-family="Liberation Sans,sans-serif" font-weight="bold" font-size="8.5" text-anchor="middle" fill="#fff" textLength="13.5" lengthAdjust="spacingAndGlyphs">Dev</text><rect x="0.500" y="6" width="5" height="3.500" fill="#f5b020" stroke="#8a5a00" stroke-width="0.700"/><rect x="0.500" y="11.500" width="5" height="3.500" fill="#f5b020" stroke="#8a5a00" stroke-width="0.700"/><rect x="11" y="6.500" width="4" height="2" fill="#f050a0"/><g transform="translate(7,8.5) scale(0.9)"><path d="M1 0h2.500v2h1.500v-2h2.500l1 3v5h-3.200v-4h-2.100v4h-3.200v-5z" fill="#2a2a2a"/><path d="M1.200 3.500v4M6.200 3.500v4" stroke="#8a8a8a" stroke-width="0.900"/></g></svg>
<svg style="left:264px;top:84px" width="16" height="16" viewBox="0 0 16 16"><rect x="0.5" y="0.5" width="15" height="7.5" fill="#1060e6"/><text x="8.0" y="7.2" font-family="Liberation Sans,sans-serif" font-weight="bold" font-size="8.5" text-anchor="middle" fill="#fff" textLength="13.5" lengthAdjust="spacingAndGlyphs">Dev</text><path d="M0.500 9.500h15M4 9.500v2M12 9.500v2" stroke="#222"/><rect x="0.500" y="11" width="6.500" height="4.500" fill="#555"/><rect x="9" y="11" width="6.500" height="4.500" fill="#555"/></svg>
<svg style="left:292px;top:84px" width="16" height="16" viewBox="0 0 16 16"><path d="M1 7l6-5 5 3.500 3-1.500v5l-3-1.500z" fill="#b4bac6" stroke="#8c929e" stroke-width="0.600"/><rect x="1.500" y="8.500" width="10" height="6" fill="#dde1e9" stroke="#8c929e"/><path d="M1.500 11.500h10M5 8.500v6" stroke="#8c929e" stroke-width="0.800"/></svg>
<svg style="left:320px;top:84px" width="16" height="16" viewBox="0 0 16 16"><rect x="0.500" y="1.500" width="12" height="8" fill="#fff" stroke="#222"/><path d="M3 3.500h3M4.500 3.500v4M3 7.500h3" stroke="#222" stroke-width="0.900"/><g transform="translate(8.5,13) rotate(45)"><rect x="-1.800" y="-7" width="3.600" height="7" fill="#30b020" stroke="#1a6a10" stroke-width="0.500"/><path d="M-1.800 0h3.600l-1.800 3z" fill="#f0d070" stroke="#7a5a10" stroke-width="0.400"/></g></svg>
<svg style="left:342px;top:84px" width="16" height="16" viewBox="0 0 16 16"><text x="9.500" y="6.500" font-family="Liberation Serif,serif" font-weight="bold" font-size="8.500" text-anchor="middle" fill="#1018d8">I/o</text><path d="M4.500 5l-3.500 4h2.500l-2.500 4.500 5.500-5.500h-2.500z" fill="#ff7a10"/><path d="M6.500 10.500l3 3.500 5.500-6" stroke="#e01010" stroke-width="1.600" fill="none"/></svg>
<svg style="left:370px;top:84px" width="16" height="16" viewBox="0 0 16 16"><path d="M6 1v4h-2l3.500 3.500 3.500-3.500h-2v-4z" fill="#b4bac6" stroke="#b0b6c4" stroke-width="0.500"/><path d="M3 10l7-3 5 4-7 4z" fill="#b4bac6"/><path d="M2.500 11l2.500 3 4-5" stroke="#dfe3ea" stroke-width="1.500" fill="none"/></svg>
<svg style="left:398px;top:84px" width="16" height="16" viewBox="0 0 16 16"><rect x="0.5" y="0.5" width="15" height="7" fill="#1060e6"/><text x="8.0" y="6.7" font-family="Liberation Sans,sans-serif" font-weight="bold" font-size="8.5" text-anchor="middle" fill="#fff" textLength="13.5" lengthAdjust="spacingAndGlyphs">Dev</text><ellipse cx="10" cy="12" rx="5" ry="3" fill="#fff" stroke="#222" stroke-width="0.900"/><circle cx="10" cy="12" r="2.200" fill="#6a2a10"/><circle cx="10" cy="12" r="1" fill="#111"/></svg>
<svg style="left:433px;top:84px" width="16" height="16" viewBox="0 0 16 16"><ellipse cx="4" cy="3.500" rx="3.500" ry="1.800" fill="none" stroke="#7a2a8a" stroke-width="0.800"/><path d="M4 0v7" stroke="#333"/><rect x="1.500" y="6.500" width="5" height="9" fill="#7a7468" stroke="#222" stroke-width="0.900"/><path d="M12.459999999999999 11.459999999999999L16.1 15.100000000000001" stroke="#b05a20" stroke-width="1.600"/><circle cx="10.5" cy="9.5" r="2.8" fill="#fff" stroke="#111" stroke-width="1.300"/></svg>
<svg style="left:467px;top:84px" width="16" height="16" viewBox="0 0 16 16"><rect x="0.500" y="0.500" width="13" height="10" fill="#fff" stroke="#1010a0"/><rect x="1" y="1" width="12" height="4" fill="#1818c8"/><path d="M2.500 6.500h9" stroke="#28c848" stroke-width="1.200"/><path d="M2.500 8.500h9" stroke="#aaa" stroke-width="1.200"/><path d="M11.82 11.82L15.399999999999999 15.399999999999999" stroke="#b05a20" stroke-width="1.600"/><circle cx="10" cy="10" r="2.6" fill="#fff" stroke="#111" stroke-width="1.300"/></svg>
<svg style="left:490px;top:84px" width="16" height="16" viewBox="0 0 16 16"><rect x="0" y="0" width="16" height="16" fill="#b4bac6"/><path d="M2 6v8M14 6v8M2 10h12" stroke="#d9dde6" stroke-width="1.600"/><path d="M5.500 4h5l-2.500 3.500z" fill="#aab0bd"/></svg>
<div class="sep" style="left:56px;top:82px;width:1px;height:18px;"></div>
<div class="sep" style="left:84px;top:82px;width:1px;height:18px;"></div>
<div class="sep" style="left:134px;top:82px;width:1px;height:18px;"></div>
<div class="sep" style="left:184px;top:82px;width:1px;height:18px;"></div>
<div class="sep" style="left:285px;top:82px;width:1px;height:18px;"></div>
<div class="sep" style="left:313px;top:82px;width:1px;height:18px;"></div>
<div class="sep" style="left:363px;top:82px;width:1px;height:18px;"></div>
<div class="sep" style="left:391px;top:82px;width:1px;height:18px;"></div>
<div class="sep" style="left:426px;top:82px;width:1px;height:18px;"></div>
<div class="sep" style="left:461px;top:82px;width:1px;height:18px;"></div>
<svg style="left:209px;top:90px" width="5" height="3"><path d="M0 0h5l-2.500 3z" fill="#1b2540"/></svg>
<svg style="left:415px;top:90px" width="5" height="3"><path d="M0 0h5l-2.500 3z" fill="#1b2540"/></svg>
<svg style="left:452px;top:90px" width="5" height="3"><path d="M0 0h5l-2.500 3z" fill="#1b2540"/></svg>
<svg style="left:513px;top:95px" width="8" height="8"><path d="M0.500 1h6" stroke="#1b2540" stroke-width="1.300"/><path d="M0.500 3.500h6l-3 3z" fill="#1b2540"/></svg>
<div style="left:528px;top:83px;width:2px;height:2px;background:#5a6a8c;"></div>
<div style="left:528px;top:87px;width:2px;height:2px;background:#5a6a8c;"></div>
<div style="left:528px;top:91px;width:2px;height:2px;background:#5a6a8c;"></div>
<div style="left:528px;top:95px;width:2px;height:2px;background:#5a6a8c;"></div>
<svg style="left:535px;top:84px" width="16" height="16" viewBox="0 0 16 16"><rect x="0.500" y="1.500" width="15" height="13" fill="#d3d8e2" stroke="#8c929e"/><rect x="1" y="2" width="14" height="3" fill="#8c929e"/><path d="M2.500 8.500h4M2.500 11h4M8 8.500h6M8 11h6" stroke="#8c929e" stroke-dasharray="1.500 0.800"/></svg>
<svg style="left:557px;top:84px" width="16" height="16" viewBox="0 0 16 16"><rect x="3.500" y="1.500" width="10" height="13" fill="#8a909c" stroke="#6a707c"/><rect x="6" y="4" width="5" height="8" fill="#d3d8e2"/><path d="M8 6h1.500v3" stroke="#6a707c" fill="none"/><path d="M0.500 5h3M0.500 10h3M14 2v12" stroke="#6a707c"/></svg>
<svg style="left:579px;top:84px" width="16" height="16" viewBox="0 0 16 16"><rect x="0.500" y="1.500" width="15" height="13" fill="#d3d8e2" stroke="#8c929e"/><path d="M0.500 4.500h15M0.500 8h15M0.500 11.500h15M4.500 1.500v13" stroke="#8c929e"/></svg>
<svg style="left:601px;top:84px" width="16" height="16" viewBox="0 0 16 16"><rect x="0" y="4" width="7" height="11" fill="#8a909c"/><rect x="1" y="10" width="5" height="4" fill="#d3d8e2"/><path d="M3 0v5l-2-2M3 5l2-2" stroke="#8a909c" fill="none"/><rect x="8" y="1" width="8" height="6" fill="#b4bac6"/><path d="M8 3h8M8 5h8M11 1v6M13.500 1v6" stroke="#e6e9ef" stroke-width="0.700"/></svg>
<svg style="left:624px;top:95px" width="8" height="8"><path d="M0.500 1h6" stroke="#1b2540" stroke-width="1.300"/><path d="M0.500 3.500h6l-3 3z" fill="#1b2540"/></svg>
<div style="left:6px;top:110px;width:2px;height:2px;background:#5a6a8c;"></div>
<div style="left:6px;top:114px;width:2px;height:2px;background:#5a6a8c;"></div>
<div style="left:6px;top:118px;width:2px;height:2px;background:#5a6a8c;"></div>
<div style="left:6px;top:122px;width:2px;height:2px;background:#5a6a8c;"></div>
<svg style="left:12px;top:107px" width="18" height="20" viewBox="0 0 18 20"><path d="M0.500 6.500h4.500M12 6.500h4.500M5.500 3.500v6M12.500 3.500v6" stroke="#111" stroke-width="1" fill="none"/><text x="9" y="18.400" font-family="Liberation Sans,sans-serif" font-size="8.5" text-anchor="middle" fill="#000" stroke="#000" stroke-width="0.120" textLength="9.5" lengthAdjust="spacingAndGlyphs">F5</text></svg>
<svg style="left:34px;top:107px" width="18" height="20" viewBox="0 0 18 20"><path d="M1.500 2.500v4h3M4.500 2.500v8M16.500 2.500v4h-3M13.500 2.500v8" stroke="#111" stroke-width="1" fill="none"/><text x="9" y="18.400" font-family="Liberation Sans,sans-serif" font-size="8.5" text-anchor="middle" fill="#000" stroke="#000" stroke-width="0.120" textLength="14" lengthAdjust="spacingAndGlyphs">sF5</text></svg>
<svg style="left:56px;top:107px" width="18" height="20" viewBox="0 0 18 20"><path d="M0.500 6.500h4.500M12 6.500h4.500M5.500 3.500v6M12.500 3.500v6" stroke="#111" stroke-width="1" fill="none"/><path d="M4.500 10.500l9-7.500" stroke="#111" stroke-width="1" fill="none"/><text x="9" y="18.400" font-family="Liberation Sans,sans-serif" font-size="8.5" text-anchor="middle" fill="#000" stroke="#000" stroke-width="0.120" textLength="9.5" lengthAdjust="spacingAndGlyphs">F6</text></svg>
<svg style="left:78px;top:107px" width="18" height="20" viewBox="0 0 18 20"><path d="M1.500 2.500v4h3M4.500 2.500v8M16.500 2.500v4h-3M13.500 2.500v8" stroke="#111" stroke-width="1" fill="none"/><path d="M4.500 10.500l9-7.500" stroke="#111" stroke-width="1" fill="none"/><text x="9" y="18.400" font-family="Liberation Sans,sans-serif" font-size="8.5" text-anchor="middle" fill="#000" stroke="#000" stroke-width="0.120" textLength="14" lengthAdjust="spacingAndGlyphs">sF6</text></svg>
<svg style="left:100px;top:107px" width="18" height="20" viewBox="0 0 18 20"><path d="M0.500 6.500h3.500M14 6.500h3.500M6.500 2.500q-3.500 4 0 8M11.500 2.500q3.500 4 0 8" stroke="#111" stroke-width="1" fill="none"/><text x="9" y="18.400" font-family="Liberation Sans,sans-serif" font-size="8.5" text-anchor="middle" fill="#000" stroke="#000" stroke-width="0.120" textLength="9.5" lengthAdjust="spacingAndGlyphs">F7</text></svg>
<svg style="left:122px;top:107px" width="18" height="20" viewBox="0 0 18 20"><path d="M0.500 6.500h3.500M14 6.500h3.500M6.500 2.500h-2.500v8h2.500M11.500 2.500h2.500v8h-2.500" stroke="#111" stroke-width="1" fill="none"/><text x="9" y="18.400" font-family="Liberation Sans,sans-serif" font-size="8.5" text-anchor="middle" fill="#000" stroke="#000" stroke-width="0.120" textLength="9.5" lengthAdjust="spacingAndGlyphs">F8</text></svg>
<svg style="left:150px;top:107px" width="18" height="20" viewBox="0 0 18 20"><path d="M1 6.500h16" stroke="#111" stroke-width="1" fill="none"/><text x="9" y="18.400" font-family="Liberation Sans,sans-serif" font-size="8.5" text-anchor="middle" fill="#000" stroke="#000" stroke-width="0.120" textLength="9.5" lengthAdjust="spacingAndGlyphs">F9</text></svg>
<svg style="left:172px;top:107px" width="18" height="20" viewBox="0 0 18 20"><path d="M9.500 3v6" stroke="#111" stroke-width="1" fill="none"/><text x="9" y="18.400" font-family="Liberation Sans,sans-serif" font-size="8.5" text-anchor="middle" fill="#000" stroke="#000" stroke-width="0.120" textLength="14" lengthAdjust="spacingAndGlyphs">sF9</text></svg>
<svg style="left:194px;top:107px" width="18" height="20" viewBox="0 0 18 20"><path d="M1 6.500h16" stroke="#111" stroke-width="1" fill="none"/><path d="M5 2.500l8 8M13 2.500l-8 8" stroke="#e81010" stroke-width="1.300"/><text x="9" y="18.400" font-family="Liberation Sans,sans-serif" font-size="8.5" text-anchor="middle" fill="#000" stroke="#000" stroke-width="0.120" textLength="14" lengthAdjust="spacingAndGlyphs">cF9</text></svg>
<svg style="left:216px;top:107px" width="18" height="20" viewBox="0 0 18 20"><path d="M9 2v9" stroke="#111" stroke-width="1" fill="none"/><path d="M5 2.500l8 8M13 2.500l-8 8" stroke="#e81010" stroke-width="1.300"/><text x="9" y="18.400" font-family="Liberation Sans,sans-serif" font-size="8" text-anchor="middle" fill="#000" stroke="#000" stroke-width="0.120" textLength="16" lengthAdjust="spacingAndGlyphs">cFI0</text></svg>
<svg style="left:244px;top:107px" width="18" height="20" viewBox="0 0 18 20"><path d="M0.500 6.500h4.500M12 6.500h4.500M5.500 3.500v6M12.500 3.500v6" stroke="#111" stroke-width="1" fill="none"/><path d="M9 2.500v8M6.500 5l2.500-2.500 2.500 2.500" stroke="#111" stroke-width="1" fill="none"/><text x="9" y="18.400" font-family="Liberation Sans,sans-serif" font-size="8.5" text-anchor="middle" fill="#000" stroke="#000" stroke-width="0.120" textLength="14" lengthAdjust="spacingAndGlyphs">sF7</text></svg>
<svg style="left:266px;top:107px" width="18" height="20" viewBox="0 0 18 20"><path d="M0.500 6.500h4.500M12 6.500h4.500M5.500 3.500v6M12.500 3.500v6" stroke="#111" stroke-width="1" fill="none"/><path d="M9 2.500v8M6.500 8l2.500 2.500 2.500-2.500" stroke="#111" stroke-width="1" fill="none"/><text x="9" y="18.400" font-family="Liberation Sans,sans-serif" font-size="8.5" text-anchor="middle" fill="#000" stroke="#000" stroke-width="0.120" textLength="14" lengthAdjust="spacingAndGlyphs">sF8</text></svg>
<svg style="left:288px;top:107px" width="18" height="20" viewBox="0 0 18 20"><path d="M1.500 2.500v4h3M4.500 2.500v8M16.500 2.500v4h-3M13.500 2.500v8" stroke="#111" stroke-width="1" fill="none"/><path d="M9 2.500v8M6.500 5l2.500-2.500 2.500 2.500" stroke="#111" stroke-width="1" fill="none"/><text x="9" y="18.400" font-family="Liberation Sans,sans-serif" font-size="8.5" text-anchor="middle" fill="#000" stroke="#000" stroke-width="0.120" textLength="14" lengthAdjust="spacingAndGlyphs">aF7</text></svg>
<svg style="left:310px;top:107px" width="18" height="20" viewBox="0 0 18 20"><path d="M1.500 2.500v4h3M4.500 2.500v8M16.500 2.500v4h-3M13.500 2.500v8" stroke="#111" stroke-width="1" fill="none"/><path d="M9 2.500v8M6.500 8l2.500 2.500 2.500-2.500" stroke="#111" stroke-width="1" fill="none"/><text x="9" y="18.400" font-family="Liberation Sans,sans-serif" font-size="8.5" text-anchor="middle" fill="#000" stroke="#000" stroke-width="0.120" textLength="14" lengthAdjust="spacingAndGlyphs">aF8</text></svg>
<svg style="left:338px;top:107px" width="18" height="20" viewBox="0 0 18 20"><path d="M0.500 6.500h4.500M12 6.500h4.500M5.500 3.500v6M12.500 3.500v6" stroke="#111" stroke-width="1" fill="none"/><path d="M9 2.500v8M6.500 5l2.500-2.500 2.500 2.500" stroke="#111" stroke-width="1" fill="none"/><path d="M4.500 10.500l9-7.500" stroke="#111" stroke-width="1" fill="none"/><text x="9" y="18.400" font-family="Liberation Sans,sans-serif" font-size="8" text-anchor="middle" fill="#000" stroke="#000" stroke-width="0.120" textLength="16" lengthAdjust="spacingAndGlyphs">saF5</text></svg>
<svg style="left:360px;top:107px" width="18" height="20" viewBox="0 0 18 20"><path d="M0.500 6.500h4.500M12 6.500h4.500M5.500 3.500v6M12.500 3.500v6" stroke="#111" stroke-width="1" fill="none"/><path d="M9 2.500v8M6.500 8l2.500 2.500 2.500-2.500" stroke="#111" stroke-width="1" fill="none"/><path d="M4.500 10.500l9-7.500" stroke="#111" stroke-width="1" fill="none"/><text x="9" y="18.400" font-family="Liberation Sans,sans-serif" font-size="8" text-anchor="middle" fill="#000" stroke="#000" stroke-width="0.120" textLength="16" lengthAdjust="spacingAndGlyphs">saF6</text></svg>
<svg style="left:382px;top:107px" width="18" height="20" viewBox="0 0 18 20"><path d="M1.500 2.500v4h3M4.500 2.500v8M16.500 2.500v4h-3M13.500 2.500v8" stroke="#111" stroke-width="1" fill="none"/><path d="M9 2.500v8M6.500 5l2.500-2.500 2.500 2.500" stroke="#111" stroke-width="1" fill="none"/><path d="M4.500 10.500l9-7.500" stroke="#111" stroke-width="1" fill="none"/><text x="9" y="18.400" font-family="Liberation Sans,sans-serif" font-size="8" text-anchor="middle" fill="#000" stroke="#000" stroke-width="0.120" textLength="16" lengthAdjust="spacingAndGlyphs">saF7</text></svg>
<svg style="left:404px;top:107px" width="18" height="20" viewBox="0 0 18 20"><path d="M1.500 2.500v4h3M4.500 2.500v8M16.500 2.500v4h-3M13.500 2.500v8" stroke="#111" stroke-width="1" fill="none"/><path d="M9 2.500v8M6.500 8l2.500 2.500 2.500-2.500" stroke="#111" stroke-width="1" fill="none"/><path d="M4.500 10.500l9-7.500" stroke="#111" stroke-width="1" fill="none"/><text x="9" y="18.400" font-family="Liberation Sans,sans-serif" font-size="8" text-anchor="middle" fill="#000" stroke="#000" stroke-width="0.120" textLength="16" lengthAdjust="spacingAndGlyphs">saF8</text></svg>
<svg style="left:432px;top:107px" width="18" height="20" viewBox="0 0 18 20"><path d="M9 2.500v8M6.500 5l2.500-2.500 2.500 2.500" stroke="#111" stroke-width="1" fill="none"/><text x="9" y="18.400" font-family="Liberation Sans,sans-serif" font-size="8.5" text-anchor="middle" fill="#000" stroke="#000" stroke-width="0.120" textLength="14" lengthAdjust="spacingAndGlyphs">aF5</text></svg>
<svg style="left:454px;top:107px" width="18" height="20" viewBox="0 0 18 20"><path d="M9 2.500v8M6.500 8l2.500 2.500 2.500-2.500" stroke="#111" stroke-width="1" fill="none"/><text x="9" y="18.400" font-family="Liberation Sans,sans-serif" font-size="8" text-anchor="middle" fill="#000" stroke="#000" stroke-width="0.120" textLength="16" lengthAdjust="spacingAndGlyphs">caF5</text></svg>
<svg style="left:476px;top:107px" width="18" height="20" viewBox="0 0 18 20"><path d="M1 6.500h15M5 9.500l8-5" stroke="#111" stroke-width="1" fill="none"/><text x="9" y="18.400" font-family="Liberation Sans,sans-serif" font-size="7" text-anchor="middle" fill="#000" stroke="#000" stroke-width="0.120" textLength="17" lengthAdjust="spacingAndGlyphs">caF10</text></svg>
<div class="sep" style="left:144px;top:108px;width:1px;height:18px;"></div>
<div class="sep" style="left:238px;top:108px;width:1px;height:18px;"></div>
<div class="sep" style="left:332px;top:108px;width:1px;height:18px;"></div>
<div class="sep" style="left:426px;top:108px;width:1px;height:18px;"></div>
<div class="sep" style="left:498px;top:108px;width:1px;height:18px;"></div>
<div class="sep" style="left:526px;top:108px;width:1px;height:18px;"></div>
<div class="sep" style="left:598px;top:108px;width:1px;height:18px;"></div>
<div class="sep" style="left:626px;top:108px;width:1px;height:18px;"></div>
<div class="sep" style="left:654px;top:108px;width:1px;height:18px;"></div>
<div class="sep" style="left:792px;top:108px;width:1px;height:18px;"></div>
<div class="sep" style="left:1062px;top:108px;width:1px;height:18px;"></div>
<div style="left:818px;top:106px;width:22px;height:22px;background:#fff3dc;border:1px solid #ecc468;"></div>
<svg style="left:503px;top:109px" width="17" height="17" viewBox="0 0 17 17"><rect x="3.500" y="1.500" width="11" height="13" fill="#c8ccd6" stroke="#111" stroke-width="1"/><path d="M1.500 5v6M1.500 8.500h2M16.500 5v6M14.500 8.500h2" stroke="#111"/><text x="9" y="12" font-family="Liberation Sans,sans-serif" font-weight="bold" font-size="9.500" text-anchor="middle" fill="#1010f0" stroke="#1010f0" stroke-width="0.300" textLength="9" lengthAdjust="spacingAndGlyphs">ST</text></svg>
<svg style="left:532px;top:109px" width="17" height="17" viewBox="0 0 17 17"><path d="M1 4.500h5M11 4.500h5M6.500 1v7M10.500 1v7" stroke="#111" stroke-width="1" fill="none"/><path d="M2.5 9h6q1.500 0 1.500 1.500v2q0 1.500-1.500 1.500h-3.5l-2 2v-2q-1.500 0-1.500-1.500v-2q0-1.500 1.500-1.500z" fill="#fff" stroke="#444" stroke-width="0.800"/><path d="M2.5 10.5h6M2.5 12h6" stroke="#444" stroke-width="0.500"/><g transform="translate(11,14) rotate(45)"><rect x="-1.800" y="-7" width="3.600" height="7" fill="#30b020" stroke="#1a6a10" stroke-width="0.500"/><path d="M-1.800 0h3.600l-1.800 3z" fill="#f0d070" stroke="#7a5a10" stroke-width="0.400"/></g></svg>
<svg style="left:554px;top:109px" width="17" height="17" viewBox="0 0 17 17"><path d="M4.5 0.5h7q1.500 0 1.500 1.500v3q0 1.500-1.500 1.500h-4.5l-2 2v-2q-1.500 0-1.500-1.500v-3q0-1.500 1.500-1.500z" fill="#fff" stroke="#444" stroke-width="0.800"/><path d="M4.5 2.0h7M4.5 3.5h7" stroke="#444" stroke-width="0.500"/><path d="M1 2.500h2" stroke="#111"/><g transform="translate(12,7) rotate(45)"><rect x="-1.800" y="-7" width="3.600" height="7" fill="#30b020" stroke="#1a6a10" stroke-width="0.500"/><path d="M-1.800 0h3.600l-1.800 3z" fill="#f0d070" stroke="#7a5a10" stroke-width="0.400"/></g><path d="M1 13.500h4M8 13.500h2M5.500 11v5M7.500 11v5M15 13.500h1" stroke="#111" stroke-width="1" fill="none"/><circle cx="12.500" cy="13.500" r="2" stroke="#111" stroke-width="1" fill="none"/></svg>
<svg style="left:576px;top:109px" width="17" height="17" viewBox="0 0 17 17"><path d="M3.5 0.5h7q1.500 0 1.500 1.500v3q0 1.500-1.500 1.500h-4.5l-2 2v-2q-1.500 0-1.500-1.500v-3q0-1.500 1.500-1.500z" fill="#fff" stroke="#444" stroke-width="0.800"/><path d="M3.5 2.0h7M3.5 3.5h7" stroke="#444" stroke-width="0.500"/><g transform="translate(12,7) rotate(45)"><rect x="-1.800" y="-7" width="3.600" height="7" fill="#30b020" stroke="#1a6a10" stroke-width="0.500"/><path d="M-1.800 0h3.600l-1.800 3z" fill="#f0d070" stroke="#7a5a10" stroke-width="0.400"/></g><path d="M1 13.500h3M13 13.500h3M6.500 11q-2.500 2.500 0 5M10.500 11q2.500 2.500 0 5" stroke="#111" stroke-width="1" fill="none"/></svg>
<svg style="left:604px;top:109px" width="17" height="17" viewBox="0 0 17 17"><path d="M3 1h11v6h-5l-2 2v-2h-4z" fill="#b4b9c4" stroke="#8c919c" stroke-width="0.700"/><path d="M1 3h3" stroke="#8c919c"/><path d="M10 5l4-3 2 2-4 3z" fill="#8c919c"/><path d="M1 13.500h3M4.500 11v5M6.500 11v5" stroke="#8c919c"/><rect x="8" y="10" width="8" height="6" fill="#b4b9c4"/><path d="M8 12h8M8 14h8M11 10v6M13.500 10v6" stroke="#e6e9ef" stroke-width="0.700"/></svg>
<svg style="left:632px;top:109px" width="17" height="17" viewBox="0 0 17 17"><path d="M4.5 0.5h8q1.500 0 1.500 1.500v3q0 1.500-1.500 1.500h-5.5l-2 2v-2q-1.500 0-1.500-1.500v-3q0-1.500 1.500-1.500z" fill="#fff" stroke="#444" stroke-width="0.800"/><path d="M4.5 2.0h8M4.5 3.5h8" stroke="#444" stroke-width="0.500"/><path d="M1 2.500h2" stroke="#111"/><path d="M1 13.500h3M4.500 11v5M6.500 11v5" stroke="#111"/><rect x="8" y="10" width="8" height="6" fill="#fff" stroke="#888" stroke-width="0.500"/><path d="M8 10.500h8M8 15.500h8" stroke="#1818a8" stroke-width="1.200"/><path d="M8 13h8" stroke="#18a848" stroke-width="1"/></svg>
<svg style="left:660px;top:109px" width="17" height="17" viewBox="0 0 17 17"><path d="M0.500 1.500h9l-1 2.500h-4.500l4 4" fill="none" stroke="#8c919c" stroke-width="2.500"/><path d="M13 4l2.500 2.500-7 7-3 0.500 0.500-3z" fill="#b4bac6" stroke="#8c919c" stroke-width="0.600"/></svg>
<svg style="left:682px;top:109px" width="17" height="17" viewBox="0 0 17 17"><rect x="0.500" y="1.500" width="12" height="13" fill="#d0d4dc" stroke="#8c919c"/><path d="M2 4h9M2 6.500h9M2 9h6M2 11.500h6" stroke="#8c919c"/><rect x="9" y="8" width="6" height="5" fill="#b4b9c4" stroke="#8c919c" stroke-width="0.600"/></svg>
<svg style="left:704px;top:109px" width="17" height="17" viewBox="0 0 17 17"><rect x="4" y="0.500" width="8" height="8" fill="#d0d4dc" stroke="#8c919c" stroke-width="0.700"/><path d="M5 3h6M5 5h6" stroke="#8c919c" stroke-width="0.700"/><path d="M0 9l4.500-3.500v7z" fill="#8c919c"/><path d="M11.24 11.24L15.0 15.0" stroke="#9aa0ac" stroke-width="1.600"/><circle cx="9" cy="9" r="3.2" fill="#e8ebf0" stroke="#9aa0ac" stroke-width="1.300"/></svg>
<svg style="left:726px;top:109px" width="17" height="17" viewBox="0 0 17 17"><rect x="4" y="0.500" width="8" height="8" fill="#d0d4dc" stroke="#8c919c" stroke-width="0.700"/><path d="M5 3h6M5 5h6" stroke="#8c919c" stroke-width="0.700"/><path d="M0 5.500l4.500 3.500-4.500 3.500z" fill="#8c919c"/><path d="M11.24 11.24L15.0 15.0" stroke="#9aa0ac" stroke-width="1.600"/><circle cx="9" cy="9" r="3.2" fill="#e8ebf0" stroke="#9aa0ac" stroke-width="1.300"/></svg>
<svg style="left:748px;top:109px" width="17" height="17" viewBox="0 0 17 17"><path d="M0 4.500h5M3 2.500l2 2-2 2" stroke="#8c919c" fill="none" stroke-width="1.200"/><path d="M7 2.500h8M7 6.500h8M7 10.500h3M12 10.500h3M7 14.500h3M12 14.500h3" stroke="#b4b9c4" stroke-width="1.300"/><path d="M7.500 1v13" stroke="#c9ced9"/></svg>
<svg style="left:770px;top:109px" width="17" height="17" viewBox="0 0 17 17"><path d="M6 4.500h-5M3 2.500l-2 2 2 2" stroke="#8c919c" fill="none" stroke-width="1.200"/><path d="M7 2.500h8M7 6.500h8M7 10.500h8M7 14.500h3M12 14.500h3" stroke="#b4b9c4" stroke-width="1.300"/></svg>
<svg style="left:799px;top:109px" width="17" height="17" viewBox="0 0 17 17"><path d="M0.500 3.500h3M5.500 3.500h5M13 3.500h3M3.500 1.500v4M5.500 1.500v4M0.500 9h3M5.500 9h5M13 9h3M3.500 7v4M5.500 7v4M7.500 9v5.500h3M13 14.500h3" stroke="#1018e8" stroke-width="1.100" fill="none"/><path d="M11.500 2v3M11.500 7.500v3M11.500 13v3" stroke="#1018e8" stroke-dasharray="1 1"/></svg>
<svg style="left:821px;top:109px" width="17" height="17" viewBox="0 0 17 17"><path d="M0.500 4.500h3M5.500 4.500h4M3.500 2.500v4M5.500 2.500v4M0.500 10h3M5.500 10h5M13 10h3M3.500 8v4M5.500 8v4M7.500 10v5.500h3M13 15.500h3" stroke="#1018e8" stroke-width="1.100" fill="none"/><g transform="translate(7,7) rotate(45)"><rect x="-1.700" y="-9" width="3.400" height="7" fill="#e81010"/><rect x="-1.700" y="-2.500" width="3.400" height="1.500" fill="#f8e020"/><path d="M-1.700 -1h3.400l-1.700 2.800z" fill="#111"/></g></svg>
<svg style="left:843px;top:109px" width="17" height="17" viewBox="0 0 17 17"><rect x="0.500" y="9.500" width="6" height="5.500" fill="#e8e8f0" stroke="#111"/><rect x="0.500" y="10" width="2.500" height="5" fill="#a01030"/><rect x="5" y="3" width="6" height="7" fill="#fff" stroke="#555" stroke-width="0.600"/><path d="M6 5h4M6 7h4" stroke="#555" stroke-width="0.700"/><circle cx="8" cy="6" r="5" fill="none" stroke="#1018e8" stroke-width="1.100"/><path d="M11.500 9.500l4 4.500" stroke="#1018e8" stroke-width="1.300"/></svg>
<svg style="left:865px;top:109px" width="17" height="17" viewBox="0 0 17 17"><rect x="0.500" y="9.500" width="6" height="5.500" fill="#e8e8f0" stroke="#111"/><rect x="0.500" y="10" width="2.500" height="5" fill="#a01030"/><rect x="5" y="3" width="6" height="7" fill="#fff" stroke="#555" stroke-width="0.600"/><path d="M6 5h4M6 7h4" stroke="#555" stroke-width="0.700"/><circle cx="8" cy="6" r="5" fill="none" stroke="#1018e8" stroke-width="1.100"/><path d="M11.500 9.500l4 4.500" stroke="#1018e8" stroke-width="1.300"/><g transform="translate(8,8) rotate(45)"><rect x="-1.700" y="-9" width="3.400" height="6.500" fill="#e81010"/><rect x="-1.700" y="-2.500" width="3.400" height="1.500" fill="#f8e020"/><path d="M-1.700 -1h3.400l-1.700 2.800z" fill="#111"/></g></svg>
<svg style="left:887px;top:109px" width="17" height="17" viewBox="0 0 17 17"><rect x="0.5" y="0.5" width="14" height="9" fill="#1060e6"/><text x="7.5" y="8.7" font-family="Liberation Sans,sans-serif" font-weight="bold" font-size="8.5" text-anchor="middle" fill="#fff" textLength="12.5" lengthAdjust="spacingAndGlyphs">Dev</text><path d="M11.24 11.74L15.0 15.5" stroke="#b05a20" stroke-width="1.600"/><circle cx="9" cy="9.5" r="3.2" fill="#fff" stroke="#111" stroke-width="1.300"/></svg>
<svg style="left:909px;top:109px" width="17" height="17" viewBox="0 0 17 17"><rect x="0.5" y="0.5" width="14" height="9" fill="#1060e6"/><text x="7.5" y="8.7" font-family="Liberation Sans,sans-serif" font-weight="bold" font-size="8.5" text-anchor="middle" fill="#fff" textLength="12.5" lengthAdjust="spacingAndGlyphs">Dev</text><path d="M8 9h7v6l-3.500-2-3.500 2z" fill="#1a6ae8"/><path d="M0.500 9v4h4v-2l3.500 3-3.500 3v-2h-6z" fill="#ff9a00" transform="translate(0.500,-1)"/><g transform="translate(11,9) rotate(45)"><rect x="-1.800" y="-7" width="3.600" height="7" fill="#30b020" stroke="#1a6a10" stroke-width="0.500"/><path d="M-1.800 0h3.600l-1.800 3z" fill="#f0d070" stroke="#7a5a10" stroke-width="0.400"/></g></svg>
<svg style="left:931px;top:109px" width="17" height="17" viewBox="0 0 17 17"><path d="M1 4h7M4.500 0.500v7" stroke="#8c919c" stroke-width="2.400"/><path d="M1.500 4h6M4.500 1v6" stroke="#dfe3ea" stroke-width="0.800"/><rect x="11.500" y="4" width="3" height="12" fill="#80858f"/><rect x="6" y="6" width="6" height="2" fill="#80858f"/><rect x="6" y="12" width="6" height="2" fill="#80858f"/></svg>
<svg style="left:953px;top:109px" width="17" height="17" viewBox="0 0 17 17"><rect x="1" y="2" width="8" height="3" fill="#dfe3ea" stroke="#8c919c" stroke-width="0.800"/><rect x="11.500" y="4" width="3" height="12" fill="#80858f"/><path d="M9 3.500h4" stroke="#80858f"/><rect x="6" y="9" width="6" height="2" fill="#80858f"/><rect x="6" y="13" width="6" height="2" fill="#80858f"/></svg>
<svg style="left:975px;top:109px" width="17" height="17" viewBox="0 0 17 17"><path d="M2 1.500h12M5 4.500h9M5 7.500h9M5 10.500h9M3 14h11" stroke="#80858f" stroke-width="1"/></svg>
<svg style="left:997px;top:109px" width="17" height="17" viewBox="0 0 17 17"><path d="M4 3h6q3 0 3 2.500t-3 2.500h-5M4 3l2-2M4 3l2 2" stroke="#80858f" fill="none"/><path d="M5 11h9M3 14.500h11" stroke="#80858f" stroke-width="1.100"/></svg>
<svg style="left:1019px;top:109px" width="17" height="17" viewBox="0 0 17 17"><path d="M2.500 1v14M2.500 3.500h11M2.500 14.500h11M6 11h8" stroke="#80858f"/><path d="M3 8l4 3 7-7" stroke="#80858f" fill="none"/></svg>
<svg style="left:1041px;top:109px" width="17" height="17" viewBox="0 0 17 17"><path d="M6.500 1h6q2.500 0 2.500 2t-2.500 2h-3l-2 2v-2h-1q-2.500 0-2.500-2t2.500-2z" fill="#e6e9ef" stroke="#80858f" stroke-width="0.800"/><path d="M0.500 2.500h3" stroke="#80858f"/><path d="M0.500 12h2.500M3.500 9.500v5M5.500 9.500v5" stroke="#80858f"/><rect x="7.500" y="9" width="8" height="6.500" fill="#b4b9c4"/><path d="M7.500 11h8M7.500 13h8M10.500 9v6.500M13 9v6.500" stroke="#eef0f5" stroke-width="0.700"/></svg>
<svg style="left:1069px;top:109px" width="17" height="17" viewBox="0 0 17 17"><path d="M0.500 3h5v-2l3.500 3-3.500 3v-2h-5z" fill="#1018e8"/><rect x="8" y="1" width="8" height="6.500" fill="#e8e8e8"/><path d="M8 3h8M8 5.500h8M11 1v6.500M13.500 1v6.500" stroke="#fff" stroke-width="0.800"/><path d="M9.500 1v6" stroke="#1018e8" stroke-width="0.800" stroke-dasharray="2 1"/><rect x="1.500" y="7" width="7" height="9" fill="#111"/><rect x="2.500" y="8" width="5" height="3" fill="none" stroke="#b0a020" stroke-width="0.800"/><rect x="3" y="12.500" width="4" height="3.500" fill="#eee"/></svg>
<svg style="left:1091px;top:109px" width="17" height="17" viewBox="0 0 17 17"><path d="M9.500 3h-5v-2l-3.500 3 3.500 3v-2h5z" fill="#e81010"/><rect x="8" y="1" width="8" height="6.500" fill="#e8e8e8"/><path d="M8 3h8M8 5.500h8M11 1v6.500M13.500 1v6.500" stroke="#fff" stroke-width="0.800"/><path d="M9.500 1v6" stroke="#1018e8" stroke-width="0.800" stroke-dasharray="2 1"/><rect x="1.500" y="7" width="7" height="9" fill="#111"/><rect x="2.500" y="8" width="5" height="3" fill="none" stroke="#b0a020" stroke-width="0.800"/><rect x="3" y="12.500" width="4" height="3.500" fill="#eee"/></svg>
<svg style="left:1114px;top:120px" width="8" height="8"><path d="M0.500 1h6" stroke="#1b2540" stroke-width="1.300"/><path d="M0.500 3.500h6l-3 3z" fill="#1b2540"/></svg>
<div style="left:0px;top:130px;width:310px;height:24px;background:linear-gradient(#4e6086,#3f4f74);"></div>
<div class="t w" style="left:4px;top:135px;font-size:12px;">导航</div>
<svg style="left:280px;top:134px" width="26" height="16"><path d="M3.500 2.500h4v6h-4zM6.500 2.500v6M1.500 8.500h8M5.500 8.500v5" stroke="#e8ecf4" fill="none" stroke-width="1"/><path d="M16 3.500l8 8M24 3.500l-8 8" stroke="#e8ecf4" stroke-width="1.3"/></svg>
<div style="left:0px;top:685px;width:310px;height:21px;background-color:#2b3a5c;background-image:radial-gradient(#36476c 0.6px,transparent 0.9px);background-size:3px 3px;"></div>
<div style="left:0px;top:154px;width:310px;height:531px;background:#fff;"></div>
<div style="left:0px;top:153px;width:309px;height:2px;background:#8a8d94;"></div>
<div style="left:0px;top:154px;width:2px;height:531px;background:#9aa2b2;"></div>
<div style="left:2px;top:155px;width:306px;height:526px;background:#6b8fd0;"></div>
<div style="left:3px;top:155px;width:304px;height:525px;background:#35476a;"></div>
<div style="left:3px;top:155px;width:304px;height:29px;background:#bcc8dc;border-radius:4px 4px 0 0;border-top:1px solid #d2daea;"></div>
<div style="left:3px;top:183px;width:304px;height:1px;background:#7f9bd0;"></div>
<div class="sep" style="left:37px;top:160px;width:1px;height:20px;"></div>
<div class="sep" style="left:65px;top:160px;width:1px;height:20px;"></div>
<div class="sep" style="left:93px;top:160px;width:1px;height:20px;"></div>
<svg style="left:9px;top:161px" width="24" height="18"><rect x="1.500" y="1.500" width="5" height="4" fill="#fff" stroke="#222" /><path d="M8.500 4v11.500h6M8.500 4.500h6" stroke="#1c1c50" fill="none"/><path d="M10.500 8l2.500-3 2.500 3zM10.500 11l2.500 3 2.500-3z" fill="#e02020"/><path d="M11 9.500h4" stroke="#e02020"/><path d="M17 8h5l-2.500 3z" fill="#1b2540"/></svg>
<svg style="left:43px;top:161px" width="18" height="18"><rect x="1.500" y="1.500" width="5" height="4" fill="#fff" stroke="#222"/><path d="M14.500 4.500h-6v4h6" stroke="#1c1c50" fill="none"/></svg>
<svg style="left:71px;top:161px" width="18" height="18" viewBox="-9 -9 18 18"><g fill="#3c3c3c"><circle r="5.600"/><rect x="-1.700" y="-8" width="3.400" height="4" transform="rotate(0)"/><rect x="-1.700" y="-8" width="3.400" height="4" transform="rotate(45)"/><rect x="-1.700" y="-8" width="3.400" height="4" transform="rotate(90)"/><rect x="-1.700" y="-8" width="3.400" height="4" transform="rotate(135)"/><rect x="-1.700" y="-8" width="3.400" height="4" transform="rotate(180)"/><rect x="-1.700" y="-8" width="3.400" height="4" transform="rotate(225)"/><rect x="-1.700" y="-8" width="3.400" height="4" transform="rotate(270)"/><rect x="-1.700" y="-8" width="3.400" height="4" transform="rotate(315)"/></g><circle r="2.600" fill="#bcc8dc"/></svg>
<div style="left:97px;top:158px;width:99px;height:22px;background:#fff;"></div>
<div style="left:183px;top:159px;width:12px;height:20px;background:#c3cee0;"></div>
<svg style="left:185px;top:167px" width="8" height="5"><path d="M0 0h8l-4 4.500z" fill="#1b2540"/></svg>
<div class="t" style="left:101px;top:161px;color:#000;font-size:12px;">全部</div>
<div style="left:290px;top:184px;width:17px;height:496px;background:#f0f0f0;"></div>
<div style="left:291px;top:201px;width:15px;height:443px;background:#c1c1c1;"></div>
<svg style="left:290px;top:184px" width="16" height="496"><path d="M5 11.500l3.500-3.500 3.500 3.500M5 485l3.500 3.500 3.500-3.500" stroke="#505050" stroke-width="1.600" fill="none"/></svg>
<div style="left:3px;top:184px;width:287px;height:496px;overflow:hidden;">
<svg style="left:3px;top:2px" width="18" height="16"><path d="M2 6l3-4h6v6h-10z" fill="#888"/><rect x="6" y="4" width="4" height="11" fill="#f04848"/><rect x="10" y="3" width="3" height="12" fill="#333"/><rect x="13" y="5" width="3" height="10" fill="#eee"/><rect x="11" y="5" width="1" height="1" fill="#3f3"/></svg>
<div class="t tree" style="left:23px;top:2px;">工程</div>
<svg style="left:17px;top:23px" width="16" height="16"><rect x="0" y="2" width="16" height="13" fill="#111"/><rect x="1" y="3" width="14" height="2" fill="#fff"/><rect x="1" y="6" width="4" height="8" fill="#e84848"/><rect x="6" y="6" width="3" height="8" fill="#ccc"/><rect x="10" y="6" width="3" height="8" fill="#2c9a3c"/><rect x="13.500" y="6" width="1.500" height="8" fill="#ddd"/></svg>
<div class="t tree" style="left:37px;top:23px;">模块配置图</div>
<svg style="left:2px;top:47px" width="9" height="9"><rect x="0.500" y="0.500" width="8" height="8" fill="#f4f4f4" stroke="#9a9a9a"/><path d="M2 4.500h5" stroke="#203080"/></svg>
<svg style="left:17px;top:44px" width="16" height="16"><path d="M1 5h6l1 1.500h7v7.500q0 1-1 1h-12q-1 0-1-1z" fill="#f5c842" stroke="#b8860b" stroke-width="0.800"/><rect x="6" y="1" width="9" height="7" fill="#7fd6f0" stroke="#666" stroke-width="0.800"/><rect x="5" y="9" width="10" height="3" fill="#222"/><path d="M2 3l5 6" stroke="#2c9a3c" stroke-width="2.500"/></svg>
<div class="t tree" style="left:37px;top:44px;">程序</div>
<svg style="left:31px;top:65px" width="16" height="16"><path d="M1 5q0-1.500 1.500-1.500h4l1.500 2h6v8.500q0 1-1 1h-11q-1 0-1-1z" fill="#f5c842" stroke="#b8860b" stroke-width="0.800"/><rect x="4" y="1" width="4" height="12" fill="#e83a3a"/><rect x="8" y="1" width="3" height="12" fill="#d8d8d8"/><rect x="11" y="1" width="3" height="12" fill="#555"/><path d="M8.500 1v12M11.500 1v12" stroke="#222" stroke-width="0.700"/></svg>
<div class="t tree" style="left:51px;top:65px;">初始</div>
<svg style="left:16px;top:89px" width="9" height="9"><rect x="0.500" y="0.500" width="8" height="8" fill="#f4f4f4" stroke="#9a9a9a"/><path d="M2 4.500h5" stroke="#203080"/></svg>
<svg style="left:31px;top:86px" width="16" height="16"><path d="M1 5q0-1.500 1.500-1.500h4l1.500 2h6v8.500q0 1-1 1h-11q-1 0-1-1z" fill="#f5c842" stroke="#b8860b" stroke-width="0.800"/><rect x="4" y="1" width="4" height="12" fill="#e83a3a"/><rect x="8" y="1" width="3" height="12" fill="#d8d8d8"/><rect x="11" y="1" width="3" height="12" fill="#555"/><path d="M8.500 1v12M11.500 1v12" stroke="#222" stroke-width="0.700"/></svg>
<div class="t tree" style="left:51px;top:86px;">扫描</div>
<svg style="left:29px;top:110px" width="9" height="9"><rect x="0.500" y="0.500" width="8" height="8" fill="#f4f4f4" stroke="#9a9a9a"/><path d="M2 4.500h5" stroke="#203080"/></svg>
<svg style="left:44px;top:107px" width="18" height="16"><circle cx="12" cy="5" r="4.500" fill="#e8e8e8" stroke="#999" stroke-width="0.600"/><path d="M9.500 5h1.500M13.500 5h1.500M11.500 2.500v5M13 2.500v5" stroke="#e01010" stroke-width="1.200"/><rect x="1" y="7" width="9" height="8" fill="#333"/><rect x="2" y="8" width="7" height="2" fill="#ddd"/><rect x="2" y="11.500" width="7" height="2" fill="#bbb"/><path d="M2 5l3-2v1.500h3v1.500h-3v1z" fill="#2cb43c"/></svg>
<div class="t tree" style="left:65px;top:107px;">MAIN</div>
<svg style="left:44px;top:131px" width="9" height="9"><rect x="0.500" y="0.500" width="8" height="8" fill="#f4f4f4" stroke="#9a9a9a"/><path d="M2 4.500h5 M4.500 2v5" stroke="#203080"/></svg>
<svg style="left:59px;top:128px" width="16" height="16"><path d="M1 5q0-1.500 1.500-1.500h3l1 1.500h8v9q0 1-1 1h-11.500q-1 0-1-1z" fill="#f5c842" stroke="#b8860b" stroke-width="0.800"/><path d="M5 1h6l3 3v9h-9z" fill="#fff" stroke="#999" stroke-width="0.600"/><path d="M6 7h2M11 7h2M8.500 4.500v5M10.500 4.500v5" stroke="#e01010" stroke-width="1.300"/></svg>
<div class="t tree" style="left:79px;top:128px;">主程序</div>
<svg style="left:44px;top:152px" width="9" height="9"><rect x="0.500" y="0.500" width="8" height="8" fill="#f4f4f4" stroke="#9a9a9a"/><path d="M2 4.500h5 M4.500 2v5" stroke="#203080"/></svg>
<svg style="left:59px;top:149px" width="16" height="16"><path d="M1 5q0-1.500 1.500-1.500h3l1 1.500h8v9q0 1-1 1h-11.500q-1 0-1-1z" fill="#f5c842" stroke="#b8860b" stroke-width="0.800"/><path d="M5 1h6l3 3v9h-9z" fill="#fff" stroke="#999" stroke-width="0.600"/><path d="M6 7h2M11 7h2M8.500 4.500v5M10.500 4.500v5" stroke="#e01010" stroke-width="1.300"/></svg>
<div class="t tree" style="left:79px;top:149px;">报警</div>
<svg style="left:44px;top:173px" width="9" height="9"><rect x="0.500" y="0.500" width="8" height="8" fill="#f4f4f4" stroke="#9a9a9a"/><path d="M2 4.500h5" stroke="#203080"/></svg>
<svg style="left:59px;top:170px" width="16" height="16"><path d="M1 5q0-1.500 1.500-1.500h3l1 1.500h8v9q0 1-1 1h-11.500q-1 0-1-1z" fill="#f5c842" stroke="#b8860b" stroke-width="0.800"/><path d="M5 1h6l3 3v9h-9z" fill="#fff" stroke="#999" stroke-width="0.600"/><path d="M6 7h2M11 7h2M8.500 4.500v5M10.500 4.500v5" stroke="#e01010" stroke-width="1.300"/></svg>
<div class="t tree" style="left:79px;top:170px;">输入输出</div>
<svg style="left:73px;top:191px" width="16" height="16"><path d="M2.500 0.500h7q1 0 1 1v11h-9.500v-11q0-1 1.500-1z" fill="#9cd0f4" stroke="#b8c4d4" stroke-width="0.800"/><path d="M1 3v10l2.500 1.500v-2.500z" fill="#e8eef8"/><path d="M3 2.500q3-1 6 0.500" stroke="#d8f0ff" fill="none"/><rect x="5" y="6.500" width="10.500" height="9" fill="#eeeefc" stroke="#3434f0" stroke-width="1"/><path d="M5 9.500h10.500M5 12.500h10.500M8.500 6.500v9" stroke="#3434f0" stroke-width="1"/><path d="M9.500 8h5M9.500 11h5M9.500 14h5" stroke="#9a9aa8" stroke-width="0.800"/></svg>
<div class="t tree" style="left:93px;top:191px;">局部标签</div>
<div style="left:0px;top:210px;width:271px;height:20px;background:#fff3a0;"></div>
<svg style="left:73px;top:212px" width="16" height="16"><path d="M2.500 1.500h8l3 3v10h-11z" fill="#fff" stroke="#888" stroke-width="0.800"/><path d="M3.500 8h2.500M9 8h2.500M6.500 5v6M8.500 5v6" stroke="#e01010" stroke-width="1.400"/></svg>
<div class="t tree" style="left:93px;top:212px;color:#000;">程序本体</div>
<svg style="left:44px;top:236px" width="9" height="9"><rect x="0.500" y="0.500" width="8" height="8" fill="#f4f4f4" stroke="#9a9a9a"/><path d="M2 4.500h5" stroke="#203080"/></svg>
<svg style="left:59px;top:233px" width="16" height="16"><path d="M1 5q0-1.500 1.500-1.500h3l1 1.500h8v9q0 1-1 1h-11.500q-1 0-1-1z" fill="#f5c842" stroke="#b8860b" stroke-width="0.800"/><path d="M5 1h6l3 3v9h-9z" fill="#fff" stroke="#999" stroke-width="0.600"/><path d="M6 7h2M11 7h2M8.500 4.500v5M10.500 4.500v5" stroke="#e01010" stroke-width="1.300"/></svg>
<div class="t tree" style="left:79px;top:233px;">伺服补偿设定</div>
<svg style="left:73px;top:254px" width="16" height="16"><path d="M2.500 0.500h7q1 0 1 1v11h-9.500v-11q0-1 1.500-1z" fill="#9cd0f4" stroke="#b8c4d4" stroke-width="0.800"/><path d="M1 3v10l2.500 1.500v-2.500z" fill="#e8eef8"/><path d="M3 2.500q3-1 6 0.500" stroke="#d8f0ff" fill="none"/><rect x="5" y="6.500" width="10.500" height="9" fill="#eeeefc" stroke="#3434f0" stroke-width="1"/><path d="M5 9.500h10.500M5 12.500h10.500M8.500 6.500v9" stroke="#3434f0" stroke-width="1"/><path d="M9.500 8h5M9.500 11h5M9.500 14h5" stroke="#9a9aa8" stroke-width="0.800"/></svg>
<div class="t tree" style="left:93px;top:254px;">局部标签</div>
<svg style="left:73px;top:275px" width="16" height="16"><path d="M2.500 1.500h8l3 3v10h-11z" fill="#fff" stroke="#888" stroke-width="0.800"/><path d="M3.500 8h2.500M9 8h2.500M6.500 5v6M8.500 5v6" stroke="#e01010" stroke-width="1.400"/></svg>
<div class="t tree" style="left:93px;top:275px;">程序本体</div>
<svg style="left:44px;top:299px" width="9" height="9"><rect x="0.500" y="0.500" width="8" height="8" fill="#f4f4f4" stroke="#9a9a9a"/><path d="M2 4.500h5 M4.500 2v5" stroke="#203080"/></svg>
<svg style="left:59px;top:296px" width="16" height="16"><path d="M1 5q0-1.500 1.500-1.500h3l1 1.500h8v9q0 1-1 1h-11.500q-1 0-1-1z" fill="#f5c842" stroke="#b8860b" stroke-width="0.800"/><path d="M5 1h6l3 3v9h-9z" fill="#fff" stroke="#999" stroke-width="0.600"/><path d="M6 7h2M11 7h2M8.500 4.500v5M10.500 4.500v5" stroke="#e01010" stroke-width="1.300"/></svg>
<div class="t tree" style="left:79px;top:296px;">灌胶伺服</div>
<svg style="left:31px;top:317px" width="16" height="16"><path d="M1 5q0-1.500 1.500-1.500h4l1.500 2h6v8.500q0 1-1 1h-11q-1 0-1-1z" fill="#f5c842" stroke="#b8860b" stroke-width="0.800"/><rect x="4" y="1" width="4" height="12" fill="#e83a3a"/><rect x="8" y="1" width="3" height="12" fill="#d8d8d8"/><rect x="11" y="1" width="3" height="12" fill="#555"/><path d="M8.500 1v12M11.500 1v12" stroke="#222" stroke-width="0.700"/></svg>
<div class="t tree" style="left:51px;top:317px;">恒定周期</div>
<svg style="left:31px;top:338px" width="16" height="16"><path d="M1 5q0-1.500 1.500-1.500h4l1.500 2h6v8.500q0 1-1 1h-11q-1 0-1-1z" fill="#f5c842" stroke="#b8860b" stroke-width="0.800"/><rect x="4" y="1" width="4" height="12" fill="#e83a3a"/><rect x="8" y="1" width="3" height="12" fill="#d8d8d8"/><rect x="11" y="1" width="3" height="12" fill="#555"/><path d="M8.500 1v12M11.500 1v12" stroke="#222" stroke-width="0.700"/></svg>
<div class="t tree" style="left:51px;top:338px;">事件</div>
<svg style="left:31px;top:359px" width="16" height="16"><path d="M1 5q0-1.500 1.500-1.500h4l1.500 2h6v8.500q0 1-1 1h-11q-1 0-1-1z" fill="#f5c842" stroke="#b8860b" stroke-width="0.800"/><rect x="4" y="1" width="4" height="12" fill="#e83a3a"/><rect x="8" y="1" width="3" height="12" fill="#d8d8d8"/><rect x="11" y="1" width="3" height="12" fill="#555"/><path d="M8.500 1v12M11.500 1v12" stroke="#222" stroke-width="0.700"/></svg>
<div class="t tree" style="left:51px;top:359px;">待机</div>
<svg style="left:31px;top:380px" width="16" height="16"><path d="M1 5q0-1.500 1.500-1.500h4l1.500 2h6v8.500q0 1-1 1h-11q-1 0-1-1z" fill="#f5c842" stroke="#b8860b" stroke-width="0.800"/><rect x="4" y="1" width="4" height="12" fill="#e83a3a"/><rect x="8" y="1" width="3" height="12" fill="#d8d8d8"/><rect x="11" y="1" width="3" height="12" fill="#555"/><path d="M8.500 1v12M11.500 1v12" stroke="#222" stroke-width="0.700"/></svg>
<div class="t tree" style="left:51px;top:380px;">无执行类型指定</div>
<svg style="left:31px;top:401px" width="16" height="16"><path d="M1 5q0-1.500 1.500-1.500h4l1.500 2h6v8.500q0 1-1 1h-11q-1 0-1-1z" fill="#f5c842" stroke="#b8860b" stroke-width="0.800"/><path d="M4 1h7l2 2v9h-9z" fill="#f4f4f4" stroke="#999" stroke-width="0.600"/><path d="M5 4h6M5 6h6M5 8h6M5 10h6" stroke="#aaa" stroke-width="0.800"/></svg>
<div class="t tree" style="left:51px;top:401px;">未登录程序</div>
<svg style="left:17px;top:422px" width="16" height="16"><path d="M1 5q0-1.500 1.500-1.500h4l1.500 2h6v8.500q0 1-1 1h-11q-1 0-1-1z" fill="#f5c842" stroke="#b8860b" stroke-width="0.800"/><rect x="4" y="6" width="9" height="7" fill="#2c8a3c"/><rect x="5" y="1.500" width="9" height="3.500" fill="#5a6ad8"/><path d="M5 9h4M5 11h3" stroke="#fff" stroke-width="0.800"/></svg>
<div class="t tree" style="left:37px;top:422px;">FB/FUN</div>
<svg style="left:2px;top:446px" width="9" height="9"><rect x="0.500" y="0.500" width="8" height="8" fill="#f4f4f4" stroke="#9a9a9a"/><path d="M2 4.500h5 M4.500 2v5" stroke="#203080"/></svg>
<svg style="left:17px;top:443px" width="16" height="16"><path d="M1 5q0-1.500 1.500-1.500h4l1.500 2h6v8.500q0 1-1 1h-11q-1 0-1-1z" fill="#f5c842" stroke="#b8860b" stroke-width="0.800"/><circle cx="8" cy="4" r="3.500" fill="#3aa858"/><circle cx="7" cy="3" r="1.500" fill="#6ac0f0"/><rect x="5" y="6" width="10" height="8" fill="#3030d8"/><path d="M6 9h8M6 11.500h8M9 7v7M12 7v7" stroke="#fff" stroke-width="0.900"/></svg>
<div class="t tree" style="left:37px;top:443px;">标签</div>
<svg style="left:2px;top:467px" width="9" height="9"><rect x="0.500" y="0.500" width="8" height="8" fill="#f4f4f4" stroke="#9a9a9a"/><path d="M2 4.500h5 M4.500 2v5" stroke="#203080"/></svg>
<svg style="left:17px;top:464px" width="16" height="16"><path d="M1 5q0-1.500 1.500-1.500h4l1.500 2h6v8.500q0 1-1 1h-11q-1 0-1-1z" fill="#f5d462" stroke="#b8860b" stroke-width="0.800"/><circle cx="6" cy="4" r="2.500" fill="#f08ab0"/><circle cx="11" cy="3.500" r="2.500" fill="#8ad06a"/><circle cx="9" cy="8" r="2.500" fill="#f0e08a"/></svg>
<div class="t tree" style="left:37px;top:464px;">软元件</div>
<svg style="left:2px;top:488px" width="9" height="9"><rect x="0.500" y="0.500" width="8" height="8" fill="#f4f4f4" stroke="#9a9a9a"/><path d="M2 4.500h5 M4.500 2v5" stroke="#203080"/></svg>
<svg style="left:17px;top:485px" width="16" height="16"><path d="M1 5q0-1.500 1.500-1.500h4l1.500 2h6v8.500q0 1-1 1h-11q-1 0-1-1z" fill="#f5c842" stroke="#b8860b" stroke-width="0.800"/><rect x="4" y="2" width="6" height="10" fill="#333"/><path d="M10 10l4-6" stroke="#3a6ad8" stroke-width="2"/></svg>
<div class="t tree" style="left:37px;top:485px;">参数</div>
</div>
<div style="left:76px;top:684px;width:52px;height:21px;background:#fff;border-radius:0 0 4px 4px;"></div>
<svg style="left:6px;top:687px" width="16" height="16"><rect x="4" y="1" width="9" height="6" fill="#9fd0f0" stroke="#444" stroke-width="0.800"/><rect x="3" y="7" width="12" height="7" fill="#444"/><rect x="1" y="4" width="6" height="10" fill="none" stroke="#2c9a3c"/><path d="M4 10h10M4 12h10" stroke="#ddd" stroke-width="0.800"/></svg>
<div class="t w" style="left:24px;top:687px;">连接目标</div>
<svg style="left:82px;top:687px" width="16" height="16"><path d="M3 5v8h6M3 9h6" stroke="#222" fill="none"/><rect x="0.500" y="1.500" width="6" height="4" fill="#f5b820" stroke="#a87808" stroke-width="0.800"/><rect x="8.500" y="6.500" width="6" height="4" fill="#f5b820" stroke="#a87808" stroke-width="0.800"/><rect x="8.500" y="11.500" width="6" height="4" fill="#f5b820" stroke="#a87808" stroke-width="0.800"/></svg>
<div class="t" style="left:99px;top:687px;color:#000;">导航</div>
<div style="left:310px;top:130px;width:1056px;height:24px;background-color:#2a3858;background-image:radial-gradient(#35456a 0.6px,transparent 0.9px);background-size:3px 3px;"></div>
<div style="left:315px;top:130px;width:193px;height:27px;background:linear-gradient(#ffffff,#fffaea 25%,#fff2cc 46%,#ffe9a9 52%,#ffe9a9);border-radius:3px 3px 0 0;"></div>
<svg style="left:321px;top:134px" width="14" height="17"><path d="M1.500 1.500h8l3.500 3.500v11h-11.500z" fill="#555"/><path d="M1 1h8l3 3v11h-11z" fill="#fff" stroke="#999" stroke-width="0.500"/><path d="M9 1v3h3" fill="#ddd" stroke="#999" stroke-width="0.500"/><rect x="8" y="7" width="3" height="5" fill="#bbb"/><path d="M2 8.500h2.500M8.500 8.500h2.500M5 5v7M8 5v7" stroke="#f01010" stroke-width="1.500"/></svg>
<div class="t" style="left:339px;top:134px;color:#000;font-size:12.3px;">输入输出 [PRG] [LD] 227步</div>
<svg style="left:492px;top:137px" width="12" height="12"><path d="M1.500 1.500l7 7M8.500 1.500l-7 7" stroke="#5a4c2c" stroke-width="1.300"/></svg>
<svg style="left:512px;top:134px" width="16" height="16"><path d="M2.500 0.500h7q1 0 1 1v11h-9.500v-11q0-1 1.500-1z" fill="#9cd0f4" stroke="#b8c4d4" stroke-width="0.800"/><path d="M1 3v10l2.500 1.500v-2.500z" fill="#e8eef8"/><path d="M3 2.500q3-1 6 0.500" stroke="#d8f0ff" fill="none"/><rect x="5" y="6.500" width="10.500" height="9" fill="#eeeefc" stroke="#3434f0" stroke-width="1"/><path d="M5 9.500h10.500M5 12.500h10.500M8.500 6.500v9" stroke="#3434f0" stroke-width="1"/><path d="M9.500 8h5M9.500 11h5M9.500 14h5" stroke="#9a9aa8" stroke-width="0.800"/></svg>
<div class="t tab" style="left:532px;top:134px;font-size:12px;">伺服补偿设定 [PRG] [局部标签...</div>
<svg style="left:734px;top:133px" width="14" height="17"><path d="M1.500 1.500h8l3.500 3.500v11h-11.500z" fill="#555"/><path d="M1 1h8l3 3v11h-11z" fill="#fff" stroke="#999" stroke-width="0.500"/><path d="M9 1v3h3" fill="#ddd" stroke="#999" stroke-width="0.500"/><rect x="8" y="7" width="3" height="5" fill="#bbb"/><path d="M2 8.500h2.500M8.500 8.500h2.500M5 5v7M8 5v7" stroke="#f01010" stroke-width="1.500"/></svg>
<div class="t tab" style="left:752px;top:134px;font-size:12.3px;">伺服补偿设定 [PRG] [LD] 905步</div>
<svg style="left:950px;top:134px" width="16" height="16"><path d="M2.500 0.500h7q1 0 1 1v11h-9.500v-11q0-1 1.500-1z" fill="#9cd0f4" stroke="#b8c4d4" stroke-width="0.800"/><path d="M1 3v10l2.500 1.500v-2.500z" fill="#e8eef8"/><path d="M3 2.500q3-1 6 0.500" stroke="#d8f0ff" fill="none"/><rect x="5" y="6.500" width="10.500" height="9" fill="#eeeefc" stroke="#3434f0" stroke-width="1"/><path d="M5 9.500h10.500M5 12.500h10.500M8.500 6.500v9" stroke="#3434f0" stroke-width="1"/><path d="M9.500 8h5M9.500 11h5M9.500 14h5" stroke="#9a9aa8" stroke-width="0.800"/></svg>
<div class="t tab" style="left:969px;top:134px;font-size:12.3px;">灌胶伺服 [PRG] [局部标签设置]</div>
<svg style="left:1167px;top:133px" width="14" height="17"><path d="M1.500 1.500h8l3.500 3.500v11h-11.500z" fill="#555"/><path d="M1 1h8l3 3v11h-11z" fill="#fff" stroke="#999" stroke-width="0.500"/><path d="M9 1v3h3" fill="#ddd" stroke="#999" stroke-width="0.500"/><rect x="8" y="7" width="3" height="5" fill="#bbb"/><path d="M2 8.500h2.500M8.500 8.500h2.500M5 5v7M8 5v7" stroke="#f01010" stroke-width="1.500"/></svg>
<div class="t tab" style="left:1185px;top:134px;width:138px;overflow:hidden;font-size:12.3px;">灌胶伺服 [PRG] [LD] 474步</div>
<svg style="left:1325px;top:134px" width="40" height="14"><path d="M8 2v8l-4.500-4zM20 2v8l4.500-4z" fill="#cfd6e4"/><path d="M28 2.500h8M28 4.500h8" stroke="#cfd6e4" stroke-width="1"/><path d="M28 6.500h8l-4 4z" fill="#cfd6e4"/></svg>
<svg style="left:713px;top:138px" width="9" height="9"><path d="M1 1l7 7M8 1l-7 7" stroke="#3c4b6e" stroke-width="1"/></svg>
<svg style="left:931px;top:138px" width="9" height="9"><path d="M1 1l7 7M8 1l-7 7" stroke="#3c4b6e" stroke-width="1"/></svg>
<svg style="left:1144px;top:138px" width="9" height="9"><path d="M1 1l7 7M8 1l-7 7" stroke="#3c4b6e" stroke-width="1"/></svg>
<div style="left:315px;top:153px;width:1051px;height:553px;background:#ffe9a8;"></div>
<div style="left:316px;top:156px;width:1049px;height:547px;background:#a0a0a0;"></div>
<div style="left:318px;top:158px;width:1046px;height:544px;background:#696969;"></div>
<div style="left:319px;top:159px;width:1044px;height:542px;background:#fff;"></div>
<div style="left:320px;top:160px;width:1040px;height:539px;background:#fff;"></div>
<div style="left:1361px;top:157px;width:2px;height:545px;background:#e3e3e3;"></div>
<div style="left:1363px;top:156px;width:1px;height:548px;background:#fff;"></div>
<div style="left:317px;top:700px;width:1046px;height:2px;background:#e3e3e3;"></div>
<div style="left:316px;top:702px;width:1048px;height:1px;background:#fff;"></div>
<div style="left:320px;top:160px;width:65px;height:21px;background:#ddeafb;"></div>
<div class="t" style="left:324px;top:162px;color:#000;font-size:12px;">写入</div>
<div style="left:364px;top:161px;width:1px;height:19px;background:repeating-linear-gradient(#fff 0 1px,transparent 1px 2px);"></div>
<svg style="left:372px;top:169px" width="7" height="4"><path d="M0.500 0h6l-3 3.500z" fill="#5c6c8c"/></svg>
<div style="left:385px;top:160px;width:43px;height:21px;background:linear-gradient(#f7fbff,#e3eefc 45%,#c5dbf8);border-right:1px solid #8fb2e4;border-bottom:1px solid #8fb2e4;"><div class="t cn" style="left:0;top:0">1</div></div>
<div style="left:428px;top:160px;width:43px;height:21px;background:linear-gradient(#f7fbff,#e3eefc 45%,#c5dbf8);border-right:1px solid #8fb2e4;border-bottom:1px solid #8fb2e4;"><div class="t cn" style="left:0;top:0">2</div></div>
<div style="left:471px;top:160px;width:43px;height:21px;background:linear-gradient(#f7fbff,#e3eefc 45%,#c5dbf8);border-right:1px solid #8fb2e4;border-bottom:1px solid #8fb2e4;"><div class="t cn" style="left:0;top:0">3</div></div>
<div style="left:514px;top:160px;width:43px;height:21px;background:linear-gradient(#f7fbff,#e3eefc 45%,#c5dbf8);border-right:1px solid #8fb2e4;border-bottom:1px solid #8fb2e4;"><div class="t cn" style="left:0;top:0">4</div></div>
<div style="left:557px;top:160px;width:43px;height:21px;background:linear-gradient(#f7fbff,#e3eefc 45%,#c5dbf8);border-right:1px solid #8fb2e4;border-bottom:1px solid #8fb2e4;"><div class="t cn" style="left:0;top:0">5</div></div>
<div style="left:600px;top:160px;width:43px;height:21px;background:linear-gradient(#f7fbff,#e3eefc 45%,#c5dbf8);border-right:1px solid #8fb2e4;border-bottom:1px solid #8fb2e4;"><div class="t cn" style="left:0;top:0">6</div></div>
<div style="left:643px;top:160px;width:43px;height:21px;background:linear-gradient(#f7fbff,#e3eefc 45%,#c5dbf8);border-right:1px solid #8fb2e4;border-bottom:1px solid #8fb2e4;"><div class="t cn" style="left:0;top:0">7</div></div>
<div style="left:686px;top:160px;width:43px;height:21px;background:linear-gradient(#f7fbff,#e3eefc 45%,#c5dbf8);border-right:1px solid #8fb2e4;border-bottom:1px solid #8fb2e4;"><div class="t cn" style="left:0;top:0">8</div></div>
<div style="left:729px;top:160px;width:43px;height:21px;background:linear-gradient(#f7fbff,#e3eefc 45%,#c5dbf8);border-right:1px solid #8fb2e4;border-bottom:1px solid #8fb2e4;"><div class="t cn" style="left:0;top:0">9</div></div>
<div style="left:772px;top:160px;width:43px;height:21px;background:linear-gradient(#f7fbff,#e3eefc 45%,#c5dbf8);border-right:1px solid #8fb2e4;border-bottom:1px solid #8fb2e4;"><div class="t cn" style="left:0;top:0">10</div></div>
<div style="left:815px;top:160px;width:43px;height:21px;background:linear-gradient(#f7fbff,#e3eefc 45%,#c5dbf8);border-right:1px solid #8fb2e4;border-bottom:1px solid #8fb2e4;"><div class="t cn" style="left:0;top:0">11</div></div>
<div style="left:858px;top:160px;width:43px;height:21px;background:linear-gradient(#f7fbff,#e3eefc 45%,#c5dbf8);border-right:1px solid #8fb2e4;border-bottom:1px solid #8fb2e4;"><div class="t cn" style="left:0;top:0">12</div></div>
<div style="left:901px;top:160px;width:43px;height:21px;background:linear-gradient(#f7fbff,#e3eefc 45%,#c5dbf8);border-right:1px solid #8fb2e4;border-bottom:1px solid #8fb2e4;"><div class="t cn" style="left:0;top:0">13</div></div>
<div style="left:944px;top:160px;width:43px;height:21px;background:linear-gradient(#f7fbff,#e3eefc 45%,#c5dbf8);border-right:1px solid #8fb2e4;border-bottom:1px solid #8fb2e4;"><div class="t cn" style="left:0;top:0">14</div></div>
<div style="left:987px;top:160px;width:43px;height:21px;background:linear-gradient(#f7fbff,#e3eefc 45%,#c5dbf8);border-right:1px solid #8fb2e4;border-bottom:1px solid #8fb2e4;"><div class="t cn" style="left:0;top:0">15</div></div>
<div style="left:1030px;top:160px;width:43px;height:21px;background:linear-gradient(#f7fbff,#e3eefc 45%,#c5dbf8);border-right:1px solid #8fb2e4;border-bottom:1px solid #8fb2e4;"><div class="t cn" style="left:0;top:0">16</div></div>
<div style="left:1073px;top:160px;width:43px;height:21px;background:linear-gradient(#f7fbff,#e3eefc 45%,#c5dbf8);border-right:1px solid #8fb2e4;border-bottom:1px solid #8fb2e4;"><div class="t cn" style="left:0;top:0">17</div></div>
<div style="left:1116px;top:160px;width:43px;height:21px;background:linear-gradient(#f7fbff,#e3eefc 45%,#c5dbf8);border-right:1px solid #8fb2e4;border-bottom:1px solid #8fb2e4;"><div class="t cn" style="left:0;top:0">18</div></div>
<div style="left:1159px;top:160px;width:43px;height:21px;background:linear-gradient(#f7fbff,#e3eefc 45%,#c5dbf8);border-right:1px solid #8fb2e4;border-bottom:1px solid #8fb2e4;"><div class="t cn" style="left:0;top:0">19</div></div>
<div style="left:1202px;top:160px;width:43px;height:21px;background:linear-gradient(#f7fbff,#e3eefc 45%,#c5dbf8);border-right:1px solid #8fb2e4;border-bottom:1px solid #8fb2e4;"><div class="t cn" style="left:0;top:0">20</div></div>
<div style="left:1245px;top:160px;width:43px;height:21px;background:linear-gradient(#f7fbff,#e3eefc 45%,#c5dbf8);border-right:1px solid #8fb2e4;border-bottom:1px solid #8fb2e4;"><div class="t cn" style="left:0;top:0">21</div></div>
<div style="left:1288px;top:160px;width:43px;height:21px;background:linear-gradient(#f7fbff,#e3eefc 45%,#c5dbf8);border-right:1px solid #8fb2e4;border-bottom:1px solid #8fb2e4;"><div class="t cn" style="left:0;top:0">22</div></div>
<div style="left:385px;top:180px;width:946px;height:1px;background:#8fb2e4;"></div>
<div style="left:1331px;top:160px;width:13px;height:522px;background:#f0f0f0;"></div>
<div style="left:1344px;top:160px;width:17px;height:522px;background:#f0f0f0;"></div>
<div style="left:1344px;top:160px;width:16px;height:7px;background:#a8a8a8;"></div>
<div style="left:1346px;top:303px;width:13px;height:61px;background:#c1c1c1;"></div>
<svg style="left:1344px;top:160px" width="17" height="522"><path d="M4.500 18.500l3.500-3.500 3.500 3.500M4.500 511l3.500 3.500 3.500-3.500" stroke="#505050" stroke-width="1.600" fill="none"/></svg>
<div style="left:320px;top:682px;width:1041px;height:18px;background:#f0f0f0;"></div>
<div style="left:1336px;top:683px;width:8px;height:16px;background:#a8a8a8;"></div>
<svg style="left:320px;top:682px" width="1020" height="17"><path d="M9.500 5l-3.500 3.500 3.500 3.500M1005 5l3.500 3.500-3.500 3.500" stroke="#b8b8b8" stroke-width="1.500" fill="none"/></svg>
<div style="left:320px;top:181px;width:23px;height:95px;background:linear-gradient(#f4f8fe,#e4eefc 40%,#c8dcf8);border-right:1px solid #7ea3de;border-bottom:1px solid #7ea3de;"></div>
<div class="t" style="left:320px;top:220px;width:21px;text-align:center;color:#000;font-size:12px;">11</div>
<div style="left:320px;top:276px;width:23px;height:95px;background:linear-gradient(#f4f8fe,#e4eefc 40%,#c8dcf8);border-right:1px solid #7ea3de;border-bottom:1px solid #7ea3de;"></div>
<div class="t" style="left:320px;top:315px;width:21px;text-align:center;color:#000;font-size:12px;">12</div>
<div style="left:320px;top:371px;width:23px;height:95px;background:linear-gradient(#f4f8fe,#e4eefc 40%,#c8dcf8);border-right:1px solid #7ea3de;border-bottom:1px solid #7ea3de;"></div>
<div class="t" style="left:320px;top:410px;width:21px;text-align:center;color:#000;font-size:12px;">13</div>
<div style="left:320px;top:466px;width:23px;height:95px;background:linear-gradient(#f4f8fe,#e4eefc 40%,#c8dcf8);border-right:1px solid #7ea3de;border-bottom:1px solid #7ea3de;"></div>
<div class="t" style="left:320px;top:505px;width:21px;text-align:center;color:#000;font-size:12px;">14</div>
<div style="left:320px;top:561px;width:23px;height:95px;background:linear-gradient(#f4f8fe,#e4eefc 40%,#c8dcf8);border-right:1px solid #7ea3de;border-bottom:1px solid #7ea3de;"></div>
<div class="t" style="left:320px;top:600px;width:21px;text-align:center;color:#000;font-size:12px;">15</div>
<div style="left:320px;top:656px;width:23px;height:26px;background:linear-gradient(#f4f8fe,#eaf2fd);border-right:1px solid #7ea3de;"></div>
<div class="t dev" style="left:385px;top:181px">M21</div>
<div class="t dev" style="left:471px;top:181px">M41</div>
<div class="t dev" style="left:1288px;top:181px">Y41</div>
<div class="t" style="left:350px;top:216px;width:34px;text-align:right;font-size:11px;color:#333;line-height:12px;height:24px;white-space:normal;">(53<br>)</div>
<div class="t cm" style="left:387px;top:228px">上下</div>
<div class="t cm" style="left:473px;top:228px">Q</div>
<div class="t dev" style="left:385px;top:276px">M350</div>
<div class="t dev" style="left:428px;top:276px">M352</div>
<div class="t cm" style="left:387px;top:323px">上下缸</div>
<div class="t cm" style="left:387px;top:334px;font-size:11px;">ON</div>
<div class="t cm" style="left:430px;top:323px">上下缸</div>
<div class="t cm" style="left:430px;top:334px;font-size:11px;">OFF</div>
<div class="t dev" style="left:385px;top:371px">M356</div>
<div class="t dev" style="left:428px;top:371px">M358</div>
<div class="t cm" style="left:387px;top:418px">上下缸</div>
<div class="t cm" style="left:387px;top:429px;font-size:11px;">ON2</div>
<div class="t cm" style="left:430px;top:418px">上下缸</div>
<div class="t cm" style="left:430px;top:429px;font-size:11px;">OFF</div>
<div class="t dev" style="left:385px;top:466px">M350</div>
<div class="t dev" style="left:428px;top:466px">M352</div>
<div class="t dev" style="left:471px;top:466px">M21</div>
<div class="t dev" style="left:1288px;top:466px">M41</div>
<div class="t" style="left:350px;top:501px;width:34px;text-align:right;font-size:11px;color:#333;line-height:12px;height:24px;white-space:normal;">(69<br>)</div>
<div class="t cm" style="left:387px;top:513px">上下缸</div>
<div class="t cm" style="left:387px;top:524px;font-size:11px;">ON</div>
<div class="t cm" style="left:430px;top:513px">上下缸</div>
<div class="t cm" style="left:430px;top:524px;font-size:11px;">OFF</div>
<div class="t cm" style="left:473px;top:513px">上下</div>
<div class="t dev" style="left:385px;top:561px">M356</div>
<div class="t dev" style="left:428px;top:561px">M358</div>
<div class="t cm" style="left:387px;top:608px">上下缸</div>
<div class="t cm" style="left:387px;top:619px;font-size:11px;">ON2</div>
<div class="t cm" style="left:430px;top:608px">上下缸</div>
<div class="t cm" style="left:430px;top:619px;font-size:11px;">OFF</div>
<div class="t dev" style="left:385px;top:656px">M22</div>
<div class="t dev" style="left:471px;top:656px">M42</div>
<div class="t dev" style="left:1288px;top:656px">Y33</div>
<svg style="left:0;top:0" width="1366" height="768" shape-rendering="crispEdges"><path d="M385.5 181V682" stroke="#000"/><path d="M1330.5 181V682" stroke="#000"/><path d="M385 198.5H402" stroke="#000"/><path d="M411 198.5H428" stroke="#000"/><path d="M402.5 194V203" stroke="#000"/><path d="M410.5 194V203" stroke="#000"/><path d="M428 198.5H471" stroke="#000"/><path d="M471 198.5H488" stroke="#000"/><path d="M497 198.5H514" stroke="#000"/><path d="M488.5 194V203" stroke="#000"/><path d="M496.5 194V203" stroke="#000"/><path d="M486 202.5L498 195" stroke="#000" stroke-width="2" shape-rendering="geometricPrecision"/><path d="M514 198.5H1288" stroke="#000"/><path d="M1288 198.5H1305" stroke="#000"/><path d="M1313 198.5H1331" stroke="#000"/><circle cx="1309.5" cy="198.5" r="4" fill="#fff" stroke="#000" shape-rendering="geometricPrecision"/><path d="M471.5 198V389" stroke="#000"/><path d="M385 293.5H402" stroke="#000"/><path d="M411 293.5H428" stroke="#000"/><path d="M402.5 289V298" stroke="#000"/><path d="M410.5 289V298" stroke="#000"/><path d="M428 293.5H445" stroke="#000"/><path d="M454 293.5H471" stroke="#000"/><path d="M445.5 289V298" stroke="#000"/><path d="M453.5 289V298" stroke="#000"/><path d="M471 293.5H471" stroke="#000"/><path d="M385 388.5H402" stroke="#000"/><path d="M411 388.5H428" stroke="#000"/><path d="M402.5 384V393" stroke="#000"/><path d="M410.5 384V393" stroke="#000"/><path d="M428 388.5H445" stroke="#000"/><path d="M454 388.5H471" stroke="#000"/><path d="M445.5 384V393" stroke="#000"/><path d="M453.5 384V393" stroke="#000"/><path d="M443 392.5L455 385" stroke="#000" stroke-width="2" shape-rendering="geometricPrecision"/><path d="M385 483.5H402" stroke="#000"/><path d="M411 483.5H428" stroke="#000"/><path d="M402.5 479V488" stroke="#000"/><path d="M410.5 479V488" stroke="#000"/><path d="M428 483.5H445" stroke="#000"/><path d="M454 483.5H471" stroke="#000"/><path d="M445.5 479V488" stroke="#000"/><path d="M453.5 479V488" stroke="#000"/><path d="M471 483.5H488" stroke="#000"/><path d="M497 483.5H514" stroke="#000"/><path d="M488.5 479V488" stroke="#000"/><path d="M496.5 479V488" stroke="#000"/><path d="M514 483.5H1288" stroke="#000"/><path d="M1288 483.5H1305" stroke="#000"/><path d="M1313 483.5H1331" stroke="#000"/><circle cx="1309.5" cy="483.5" r="4" fill="#fff" stroke="#000" shape-rendering="geometricPrecision"/><path d="M471.5 483V579" stroke="#000"/><path d="M385 578.5H402" stroke="#000"/><path d="M411 578.5H428" stroke="#000"/><path d="M402.5 574V583" stroke="#000"/><path d="M410.5 574V583" stroke="#000"/><path d="M428 578.5H445" stroke="#000"/><path d="M454 578.5H471" stroke="#000"/><path d="M445.5 574V583" stroke="#000"/><path d="M453.5 574V583" stroke="#000"/><path d="M443 582.5L455 575" stroke="#000" stroke-width="2" shape-rendering="geometricPrecision"/><path d="M385 673.5H402" stroke="#000"/><path d="M411 673.5H428" stroke="#000"/><path d="M402.5 669V678" stroke="#000"/><path d="M410.5 669V678" stroke="#000"/><path d="M428 673.5H471" stroke="#000"/><path d="M471 673.5H488" stroke="#000"/><path d="M497 673.5H514" stroke="#000"/><path d="M488.5 669V678" stroke="#000"/><path d="M496.5 669V678" stroke="#000"/><path d="M486 677.5L498 670" stroke="#000" stroke-width="2" shape-rendering="geometricPrecision"/><path d="M514 673.5H1288" stroke="#000"/><path d="M1288 673.5H1305" stroke="#000"/><path d="M1313 673.5H1331" stroke="#000"/><circle cx="1309.5" cy="673.5" r="4" fill="#fff" stroke="#000" shape-rendering="geometricPrecision"/><path d="M471.5 673V682" stroke="#000"/></svg>
<div style="left:682px;top:480px;width:8px;height:8px;background:#ffff00;border:1px solid #000;"></div>
<div style="left:684px;top:482px;width:4px;height:4px;background:#ffff00;border:1px solid #000;"></div>
<div class="t cm" style="left:1289px;top:228px;line-height:12px;height:40px;white-space:normal;width:40px;">二次灌<br>胶上下<br>缸</div>
<div class="t cm" style="left:1290px;top:513px;">Q</div>
<div style="left:0px;top:706px;width:1366px;height:22px;background:#2b3858;"></div>
<div style="left:444px;top:709px;width:1px;height:18px;background:#e8ecf4;"></div>
<div style="left:628px;top:709px;width:1px;height:18px;background:#e8ecf4;"></div>
<div style="left:772px;top:709px;width:1px;height:18px;background:#e8ecf4;"></div>
<div style="left:886px;top:709px;width:1px;height:18px;background:#e8ecf4;"></div>
<div style="left:1040px;top:709px;width:1px;height:18px;background:#e8ecf4;"></div>
<div style="left:1204px;top:709px;width:1px;height:18px;background:#e8ecf4;"></div>
<div style="left:1278px;top:709px;width:1px;height:18px;background:#e8ecf4;"></div>
<div style="left:1312px;top:709px;width:1px;height:18px;background:#e8ecf4;"></div>
<div class="t sb" style="left:778px;top:711px;">FX5U</div>
<div class="t sb" style="left:892px;top:711px;">本站</div>
<div class="t sb" style="left:1046px;top:711px;letter-spacing:0.5px;">20/227步</div>
<div class="t sb" style="left:1211px;top:711px;">改写</div>
<div class="t" style="left:1283px;top:711px;color:#7a7f8a;">大写</div>
<div class="t" style="left:1318px;top:711px;color:#7a7f8a;">数字</div>
<div style="left:0px;top:728px;width:1366px;height:40px;background:linear-gradient(90deg,#154c6c,#164f6e 25%,#144d6d 50%,#114568 65%,#0e3a62 78%,#0f335d 90%,#10305a);"></div>
<div style="left:252px;top:728px;width:48px;height:40px;background:#10609c;"></div>
<div style="left:252px;top:766px;width:48px;height:2px;background:#7fbdee;"></div>
<div style="left:109px;top:766px;width:40px;height:2px;background:#7fbdee;"></div>
<svg style="left:16px;top:739px" width="17" height="17"><path d="M0 2.500l7-1v6.500h-7zM8 1.300l9-1.300v8h-9zM0 9h7v6.500l-7-1zM8 9h9v8l-9-1.300z" fill="#fff"/></svg>
<svg style="left:62px;top:736px" width="24" height="24" viewBox="-12 -12 24 24"><defs><clipPath id="fcl"><rect x="-12" y="-4" width="9.700" height="16"/></clipPath></defs><circle cx="-4.4" cy="-4.4" r="6" fill="#fff" stroke="#164e6d" stroke-width="1.100"/><circle cx="4.4" cy="-4.4" r="6" fill="#fff" stroke="#164e6d" stroke-width="1.100"/><circle cx="4.4" cy="4.4" r="6" fill="#fff" stroke="#164e6d" stroke-width="1.100"/><circle cx="-4.4" cy="4.4" r="6" fill="#fff" stroke="#164e6d" stroke-width="1.100"/><circle cx="-4.4" cy="-4.4" r="6" fill="#fff" stroke="#164e6d" stroke-width="1.100" clip-path="url(#fcl)"/></svg>
<svg style="left:118px;top:736px" width="24" height="24"><path d="M2 11.500c0.500-6 5-9.500 10-9.500 6 0 9.500 4 9.500 10v2h-13.500c0.300 3 2.500 4.500 5.500 4.500 2.500 0 4.500-0.700 6.500-1.800v4.300c-2 1.200-4.500 1.800-7.500 1.800-6 0-9.800-3.600-9.800-9 0-3.500 2-6.500 5-8-1.500 1.500-2.300 3-2.500 4.700h8.500c0-2.800-1.300-4.500-4-4.500-3 0-5.800 2-7.700 5.500z" fill="#1e8ae6"/></svg>
<svg style="left:166px;top:738px" width="24" height="22"><path d="M0 3h8l2 2h13v3h-23z" fill="#e8a818"/><rect x="0" y="5" width="23" height="15" fill="#ffd860"/><path d="M0 20v-9h23v9z" fill="#f8c838"/><path d="M6 20v-6h11v6h-3v-3h-5v3z" fill="#3a8ad8"/></svg>
<svg style="left:215px;top:734px" width="24" height="26"><path d="M7.500 10v-3.500a4.500 4.500 0 0 1 9 0v3.500" stroke="#fff" stroke-width="1.300" fill="none"/><path d="M0.500 10h23v13.500q0 1.500-1.500 1.500h-20q-1.500 0-1.500-1.500z" fill="#fff"/><rect x="7" y="12.500" width="4.500" height="4.500" fill="#f05020"/><rect x="12.500" y="12.500" width="4.500" height="4.500" fill="#7cbc00"/><rect x="7" y="18" width="4.500" height="4.500" fill="#00a4f0"/><rect x="12.500" y="18" width="4.500" height="4.500" fill="#ffb900"/></svg>
<svg style="left:264px;top:735px" width="24" height="24" viewBox="0 0 16 16"><rect width="16" height="16" fill="url(#gi)"/><path d="M2 5h7M5.500 3v8M7.500 7.500h6v6h-6zM10.500 5.500v8M7.500 10.500h6" stroke="#fff" stroke-width="1.200" fill="none"/></svg>
<svg style="left:1040px;top:739px;transform:rotate(-8deg)" width="19" height="18"><path d="M2 3q7-3 15 0l-1 12q-7 3-14 0z" fill="#f4511e"/><path d="M13.500 5.500c-3-1.500-8-1-8 1.500s8 1.500 8 4.500-5.500 3-8.500 1.200" stroke="#fff" stroke-width="2.200" fill="none"/></svg>
<svg style="left:1212px;top:739px;transform:rotate(-8deg)" width="19" height="18"><path d="M2 3q7-3 15 0l-1 12q-7 3-14 0z" fill="#f4511e"/><path d="M13.500 5.500c-3-1.500-8-1-8 1.500s8 1.500 8 4.500-5.500 3-8.500 1.200" stroke="#fff" stroke-width="2.200" fill="none"/></svg>
<svg style="left:1064px;top:739px" width="19" height="18"><ellipse cx="9.500" cy="9" rx="9" ry="8" fill="#e8d820"/><circle cx="9.500" cy="9" r="5" fill="#2c8a2c"/><path d="M9.500 6v6M6.500 9h6" stroke="#fff" stroke-width="1.600"/></svg>
<svg style="left:1089px;top:739px" width="18" height="18"><rect width="18" height="18" rx="2" fill="#3a8ad0"/><rect x="3" y="3" width="12" height="9" fill="#a8e0f8"/><path d="M3 14h12M5 8l3 2 5-4" stroke="#fff" stroke-width="1.200" fill="none"/></svg>
<svg style="left:1113px;top:741px" width="20" height="14"><path d="M5.500 3.500h12v8h-12z" stroke="#fff" fill="none"/><rect x="7" y="5" width="9" height="5" fill="#fff"/><path d="M1 5h3M2.500 3v4M2.500 7v3" stroke="#fff" fill="none"/></svg>
<svg style="left:1139px;top:740px" width="18" height="16"><g stroke="#fff" fill="none" stroke-width="1.200"><path d="M2 14a12 12 0 0 1 12-12" opacity="0.600"/><path d="M5 14a9 9 0 0 1 9-9"/><path d="M8 14a6 6 0 0 1 6-6"/><path d="M11 14a3 3 0 0 1 3-3"/></g><circle cx="13.500" cy="13.500" r="1.200" fill="#fff"/></svg>
<svg style="left:1161px;top:740px" width="19" height="16"><path d="M1.500 5.500h3l4-3.500v12l-4-3.500h-3z" stroke="#fff" fill="none" stroke-width="1.100"/><path d="M11 5q1.500 3 0 6M13.500 3.500q2.500 4.500 0 9M16 2q3.500 6 0 12" stroke="#fff" fill="none" stroke-width="1.100"/></svg>
<div style="left:1185px;top:739px;width:17px;height:17px;background:#0c2f50;"></div>
<div class="t" style="left:1187px;top:739px;font-size:13px;line-height:18px;color:#d4d4d4;">英</div>
<div class="t w" style="left:1246px;top:731px;width:60px;text-align:center;font-size:12px;">18:04</div>
<div class="t w" style="left:1240px;top:750px;width:72px;text-align:center;font-size:12px;letter-spacing:0.6px;">2020/8/11</div>
<svg style="left:1324px;top:739px" width="18" height="18"><path d="M1.500 1.500h15v11h-4.500v3.500l-3.500-3.500h-7z" stroke="#fff" fill="none" stroke-width="1.200"/></svg>
<div style="left:1358px;top:728px;width:1px;height:40px;background:#4f6a8a;"></div>
</body></html>
